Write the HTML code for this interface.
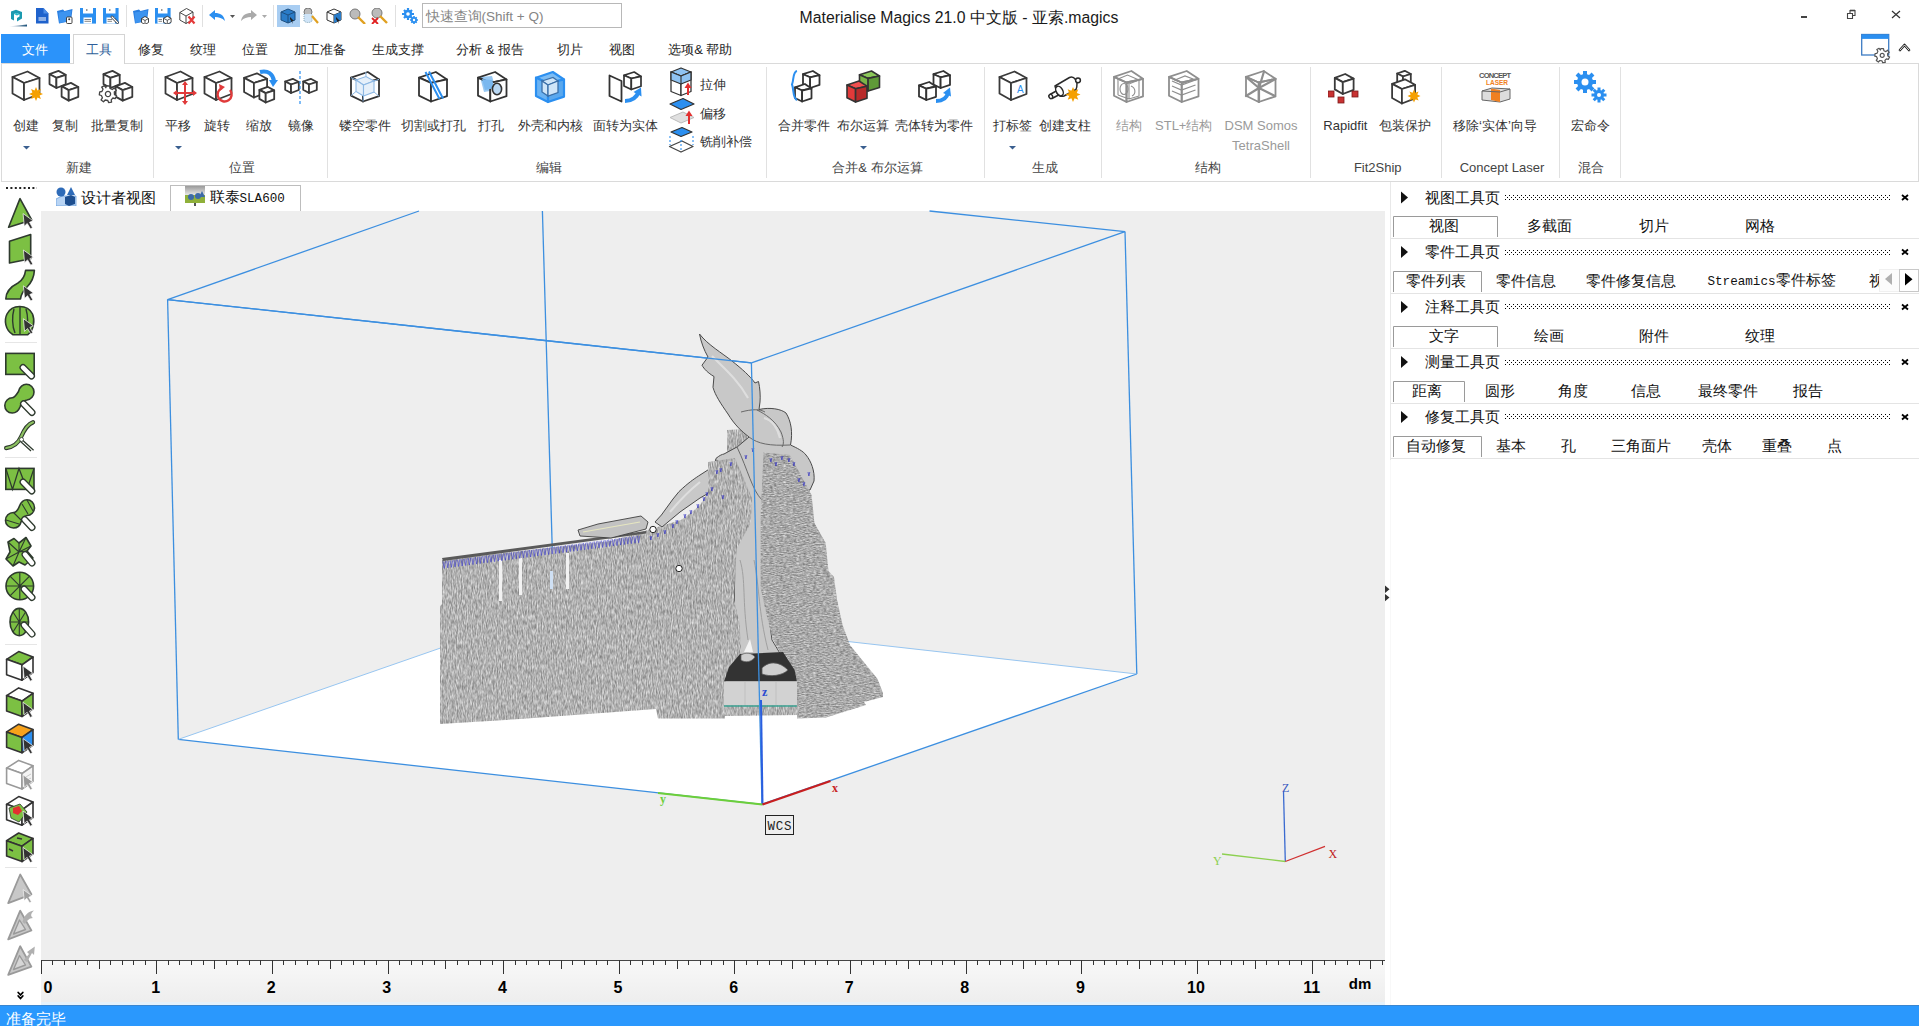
<!DOCTYPE html><html><head><meta charset="utf-8"><title>Magics</title><style>
html,body{margin:0;padding:0;width:1919px;height:1026px;overflow:hidden;background:#fff;font-family:'Liberation Sans',sans-serif;}
#root{position:relative;width:1919px;height:1026px;overflow:hidden;}
</style></head><body><div id="root">
<svg style="position:absolute;left:8px;top:9px;" width="20" height="19" viewBox="0 0 20 19"><defs><linearGradient id="lg1" x1="0" x2="1"><stop offset="0" stop-color="#fff"/><stop offset="1" stop-color="#1a4f78"/></linearGradient></defs><path d="M3 2.5 L8 0.8 L14 3 L14 9.5 L9 12.5 L9 9 L11.5 7.5 L11.5 5.2 L8.5 4 L6 5 L6 11.5 L3 10Z" fill="#1b9ab0"/><path d="M6 5 L8.5 4 L11.5 5.2 L9 6.5Z" fill="#23b6c8"/><path d="M0.5 17.5 L19 15.5 L19 17.5Z" fill="url(#lg1)"/></svg>
<svg style="position:absolute;left:36px;top:8px;" width="13" height="16" viewBox="0 0 13 16"><path d="M0 0 H7.5 L12.5 5.5 V15.6 H0Z" fill="#1f62cc"/><path d="M7.5 0 V5.5 H12.5" fill="#4d8ee8"/><path d="M2.5 10 H10 M2.5 12 H10" stroke="#fff" stroke-width="1.1"/></svg>
<svg style="position:absolute;left:57px;top:8px;" width="16" height="16" viewBox="0 0 16 16"><path d="M0 3 L6 1.5 L7.5 3 L15.5 1 L14 13 L2 15.5Z" fill="#2a7ee0"/><path d="M1.5 4.5 L14.5 2.5 L13 13 L2.5 15Z" fill="#3d94f0"/><rect x="9.5" y="9" width="5.5" height="6.5" rx="1" fill="#fff" stroke="#333" stroke-width="0.9"/><circle cx="12.2" cy="11.2" r="1" fill="#333"/></svg>
<svg style="position:absolute;left:80px;top:8px;" width="16" height="16" viewBox="0 0 16 16"><path d="M0 0 H16 V15.6 H0Z" fill="#2b8ff0"/><rect x="3" y="0" width="10" height="5.5" fill="#fff"/><rect x="6" y="1.5" width="1.5" height="1" fill="#333"/><rect x="3.5" y="9.5" width="8.5" height="6.1" fill="#fff"/><path d="M4.5 11.5 H11 M4.5 13.3 H11" stroke="#777" stroke-width="0.9"/></svg>
<svg style="position:absolute;left:103px;top:8px;" width="16" height="16" viewBox="0 0 16 16"><path d="M0 0 H15.6 V15.6 H0Z" fill="#2b8ff0"/><rect x="3" y="0" width="9.5" height="5.5" fill="#fff"/><rect x="6" y="1.5" width="1.5" height="1" fill="#333"/><rect x="3.5" y="9.5" width="8.5" height="6.1" fill="#fff"/><path d="M4.5 11.5 H9 M4.5 13.3 H9" stroke="#777" stroke-width="0.9"/><path d="M9 9 L14.5 14.5" stroke="#333" stroke-width="2.6" stroke-linecap="round"/><path d="M9 9 L14.5 14.5" stroke="#fff" stroke-width="1.2" stroke-linecap="round"/></svg>
<div style="position:absolute;left:126px;top:5px;width:1px;height:22px;background:#e0e0e0"></div>
<svg style="position:absolute;left:133px;top:8px;" width="17" height="16" viewBox="0 0 17 16"><path d="M0 3 L6 1.5 L7.5 3 L15.5 1 L14 13 L2 15.5Z" fill="#2a7ee0"/><path d="M1.5 4.5 L14.5 2.5 L13 13 L2.5 15Z" fill="#3d94f0"/><g transform="translate(12,12.5)"><path d="M0 -4 L3.5 -2 L3.5 2 L0 4 L-3.5 2 L-3.5 -2Z" fill="#fff" stroke="#333" stroke-width="0.9"/><path d="M-3.5 -2 L0 0 L3.5 -2 M0 0 V4" fill="none" stroke="#333" stroke-width="0.8"/></g></svg>
<svg style="position:absolute;left:155px;top:8px;" width="17" height="16" viewBox="0 0 17 16"><path d="M0 0 H15.6 V15.6 H0Z" fill="#2b8ff0"/><rect x="3" y="0" width="9.5" height="5.5" fill="#fff"/><rect x="6" y="1.5" width="1.5" height="1" fill="#333"/><rect x="2.5" y="9.5" width="6" height="6.1" fill="#fff"/><path d="M3.5 11.5 H7 M3.5 13.3 H7" stroke="#777" stroke-width="0.9"/><g transform="translate(12.3,12.3)"><path d="M0 -4 L3.8 -2 L3.8 2 L0 4 L-3.8 2 L-3.8 -2Z" fill="#fff" stroke="#333" stroke-width="0.9"/><path d="M-3.8 -2 L0 0 L3.8 -2 M0 0 V4" fill="none" stroke="#333" stroke-width="0.8"/></g></svg>
<svg style="position:absolute;left:179px;top:8px;" width="17" height="17" viewBox="0 0 17 17"><path d="M7.5 0.5 L14 4 L14 11.5 L7 15.5 L0.8 12 L0.8 4.5Z M0.8 4.5 L7 8 L14 4 M7 8 V15.5" fill="#fff" stroke="#333" stroke-width="0.9" stroke-linejoin="round"/><path d="M9.5 8.5 L15.5 15.5 M15.5 8.5 L9.5 15.5" stroke="#e43a3a" stroke-width="2.2"/></svg>
<div style="position:absolute;left:202px;top:5px;width:1px;height:22px;background:#e0e0e0"></div>
<svg style="position:absolute;left:209px;top:10px;" width="28" height="12" viewBox="0 0 28 12"><path d="M0 5 L6 0 V3 C11 3 15 5 16 11 C13 8 10 7 6 7 V10Z" fill="#2b8ff0"/><path d="M21 5 H26 L23.5 8Z" fill="#555"/></svg>
<svg style="position:absolute;left:241px;top:10px;" width="28" height="12" viewBox="0 0 28 12"><path d="M16 5 L10 0 V3 C5 3 1 5 0 11 C3 8 6 7 10 7 V10Z" fill="#aaa"/><path d="M21 5 H26 L23.5 8Z" fill="#aaa"/></svg>
<div style="position:absolute;left:273px;top:5px;width:1px;height:22px;background:#e0e0e0"></div>
<div style="position:absolute;left:277px;top:5px;width:23px;height:22px;background:#a8cdf2"></div>
<svg style="position:absolute;left:280px;top:8px;" width="17" height="16" viewBox="0 0 17 16"><path d="M8 1 L15 4 L15 12 L8 15 L1 12 L1 4Z" fill="#2a7cc8" stroke="#1d4f80" stroke-width="1"/><path d="M1 4 L8 7 L15 4 M8 7 V15" fill="none" stroke="#1d4f80"/><path d="M10 9 L14 13 L12 13 L13 16 L10 11Z" fill="#222"/></svg>
<svg style="position:absolute;left:303px;top:8px;" width="17" height="16" viewBox="0 0 17 16"><circle cx="5" cy="4" r="4" fill="#bbb" stroke="#777"/><path d="M1 6 V13 C3 15 7 15 9 13 V6" fill="#cfe4f7" stroke="#8ab" stroke-dasharray="1 1"/><path d="M9 8 L15 15" stroke="#e0a020" stroke-width="2.2"/></svg>
<svg style="position:absolute;left:326px;top:8px;" width="16" height="16" viewBox="0 0 16 16"><path d="M8 1 L15 4 L15 12 L8 15 L1 12 L1 4Z M1 4 L8 7 L15 4 M8 7 V15" fill="#fff" stroke="#333" stroke-width="1"/><path d="M8 7 L15 4 L15 12 L8 15Z" fill="#2a7cc8"/><path d="M10 9 L14 13 L12 13 L13 16 L10 11Z" fill="#222"/></svg>
<svg style="position:absolute;left:349px;top:8px;" width="17" height="16" viewBox="0 0 17 16"><circle cx="6" cy="6" r="5" fill="#bbb" stroke="#777"/><path d="M9 9 L16 16" stroke="#e0a020" stroke-width="2.4"/></svg>
<svg style="position:absolute;left:371px;top:8px;" width="17" height="16" viewBox="0 0 17 16"><circle cx="6" cy="5" r="5" fill="#bbb" stroke="#777"/><path d="M9 8 L16 15" stroke="#e0a020" stroke-width="2.4"/><path d="M1 10 L7 16 M7 10 L1 16" stroke="#e02020" stroke-width="1.8"/></svg>
<div style="position:absolute;left:395px;top:5px;width:1px;height:22px;background:#e0e0e0"></div>
<svg style="position:absolute;left:402px;top:8px;" width="16" height="16" viewBox="0 0 16 16"><g fill="#2b8ff0"><circle cx="6" cy="6" r="4.2"/><circle cx="12" cy="12" r="3"/></g><g stroke="#2b8ff0" stroke-width="2.2"><path d="M6 0 V12 M0 6 H12 M2 2 L10 10 M10 2 L2 10"/><path d="M12 8 V16 M8 12 H16 M9.3 9.3 L14.7 14.7 M14.7 9.3 L9.3 14.7" stroke-width="1.6"/></g><circle cx="6" cy="6" r="1.8" fill="#fff"/><circle cx="12" cy="12" r="1.2" fill="#fff"/></svg>
<div style="position:absolute;left:422px;top:3px;width:200px;height:25px;border:1px solid #b8b8b8;background:#fff;box-sizing:border-box"></div>
<div style="position:absolute;left:425.5px;top:16.7px;transform:translate(0,-50%);white-space:nowrap;font-family:'Liberation Sans', sans-serif;font-size:13.5px;line-height:1;color:#858585;">快速查询(Shift + Q)</div>
<div style="position:absolute;left:959px;top:17.5px;transform:translate(-50%,-50%);white-space:nowrap;font-family:'Liberation Sans', sans-serif;font-size:15.8px;line-height:1;color:#1a1a1a;">Materialise Magics 21.0 中文版 - 亚索.magics</div>
<div style="position:absolute;left:1801px;top:16px;width:6px;height:1.6px;background:#444"></div>
<svg style="position:absolute;left:1846px;top:9px;" width="11" height="11" viewBox="0 0 11 11"><path d="M1.5 4.5 H6.5 V9.5 H1.5Z M4 4.5 V1.5 H9 V6.5 H6.5" fill="none" stroke="#444" stroke-width="1.1"/><path d="M4 1.5 H9" stroke="#444" stroke-width="1.6"/></svg>
<svg style="position:absolute;left:1891px;top:10px;" width="10" height="9" viewBox="0 0 10 9"><path d="M1 1 L9 8 M9 1 L1 8" stroke="#333" stroke-width="1.2"/></svg>
<div style="position:absolute;left:1px;top:63px;width:1918px;height:119px;border:1px solid #dadada;background:#fff;box-sizing:border-box"></div>
<div style="position:absolute;left:1px;top:34px;width:69px;height:29px;background:#2b93fa"></div>
<div style="position:absolute;left:35px;top:49px;transform:translate(-50%,-50%);white-space:nowrap;font-family:'Liberation Sans', sans-serif;font-size:13px;line-height:1;color:#fff;">文件</div>
<div style="position:absolute;left:73px;top:34px;width:52px;height:30px;border:1px solid #d4d4d4;border-bottom:none;background:#fff;box-sizing:border-box"></div>
<div style="position:absolute;left:99px;top:49px;transform:translate(-50%,-50%);white-space:nowrap;font-family:'Liberation Sans', sans-serif;font-size:13px;line-height:1;color:#2f5f9a;">工具</div>
<div style="position:absolute;left:150.8px;top:49px;transform:translate(-50%,-50%);white-space:nowrap;font-family:'Liberation Sans', sans-serif;font-size:13px;line-height:1;color:#262626;">修复</div>
<div style="position:absolute;left:203.3px;top:49px;transform:translate(-50%,-50%);white-space:nowrap;font-family:'Liberation Sans', sans-serif;font-size:13px;line-height:1;color:#262626;">纹理</div>
<div style="position:absolute;left:254.7px;top:49px;transform:translate(-50%,-50%);white-space:nowrap;font-family:'Liberation Sans', sans-serif;font-size:13px;line-height:1;color:#262626;">位置</div>
<div style="position:absolute;left:319.5px;top:49px;transform:translate(-50%,-50%);white-space:nowrap;font-family:'Liberation Sans', sans-serif;font-size:13px;line-height:1;color:#262626;">加工准备</div>
<div style="position:absolute;left:397.8px;top:49px;transform:translate(-50%,-50%);white-space:nowrap;font-family:'Liberation Sans', sans-serif;font-size:13px;line-height:1;color:#262626;">生成支撑</div>
<div style="position:absolute;left:490px;top:49px;transform:translate(-50%,-50%);white-space:nowrap;font-family:'Liberation Sans', sans-serif;font-size:13px;line-height:1;color:#262626;">分析 &amp; 报告</div>
<div style="position:absolute;left:570.3px;top:49px;transform:translate(-50%,-50%);white-space:nowrap;font-family:'Liberation Sans', sans-serif;font-size:13px;line-height:1;color:#262626;">切片</div>
<div style="position:absolute;left:622.2px;top:49px;transform:translate(-50%,-50%);white-space:nowrap;font-family:'Liberation Sans', sans-serif;font-size:13px;line-height:1;color:#262626;">视图</div>
<div style="position:absolute;left:700.3px;top:49px;transform:translate(-50%,-50%);white-space:nowrap;font-family:'Liberation Sans', sans-serif;font-size:13px;line-height:1;color:#262626;">选项&amp; 帮助</div>
<svg style="position:absolute;left:1860px;top:33px;" width="32" height="31" viewBox="0 0 32 31"><rect x="1.7" y="1.5" width="27" height="20.5" fill="#fff" stroke="#3d7cc4" stroke-width="1.3"/><rect x="1.7" y="1.5" width="27" height="4.4" fill="#2b8ff0"/><g transform="translate(22.2,22.4)"><path d="M-1.3 -6.8 H1.3 L1.7 -4.7 L3.7 -3.8 L5.3 -5.2 L7 -3.1 L5.4 -1.7 L5.6 0.5 L7.4 1.5 L6.2 3.9 L4.2 3.4 L2.7 5 L3.1 7 L0.5 7.3 L-0.2 5.5 L-2.4 5.1 L-3.8 6.6 L-5.9 5 L-4.8 3.2 L-5.6 1.3 L-7.4 0.8 L-7.1 -1.9 L-5.2 -2.1 L-4.3 -4.1 L-5.4 -5.9 L-3.1 -7.1 L-1.9 -5.4Z" fill="#fff" stroke="#555" stroke-width="1.2" stroke-linejoin="round"/><circle r="2" fill="#fff" stroke="#555" stroke-width="1.2"/></g></svg>
<svg style="position:absolute;left:1898px;top:42px;" width="13" height="10" viewBox="0 0 13 10"><path d="M2 8 L6.5 3 L11 8" fill="none" stroke="#222" stroke-width="2.6" stroke-linejoin="round" stroke-linecap="round"/><path d="M2 8 L6.5 3 L11 8" fill="none" stroke="#fff" stroke-width="0.9" stroke-linejoin="round" stroke-linecap="round"/></svg>
<div style="position:absolute;left:153px;top:67px;width:1px;height:111px;background:#e1e1e1"></div>
<div style="position:absolute;left:327px;top:67px;width:1px;height:111px;background:#e1e1e1"></div>
<div style="position:absolute;left:766px;top:67px;width:1px;height:111px;background:#e1e1e1"></div>
<div style="position:absolute;left:984px;top:67px;width:1px;height:111px;background:#e1e1e1"></div>
<div style="position:absolute;left:1101px;top:67px;width:1px;height:111px;background:#e1e1e1"></div>
<div style="position:absolute;left:1310px;top:67px;width:1px;height:111px;background:#e1e1e1"></div>
<div style="position:absolute;left:1441px;top:67px;width:1px;height:111px;background:#e1e1e1"></div>
<div style="position:absolute;left:1559px;top:67px;width:1px;height:111px;background:#e1e1e1"></div>
<div style="position:absolute;left:1620px;top:67px;width:1px;height:111px;background:#e1e1e1"></div>
<svg style="position:absolute;left:8px;top:68px;" width="40" height="38" viewBox="0 0 40 38"><path d="M4.5 9.0 L19.5 3.5 L31.5 10.0 L16.0 15.0Z" fill="#fff" stroke="#3a3a3a" stroke-width="1.8" stroke-linejoin="round"/><path d="M4.5 9.0 L16.0 15.0 L16.0 32.0 L4.5 25.5Z" fill="#fff" stroke="#3a3a3a" stroke-width="1.8" stroke-linejoin="round"/><path d="M16.0 15.0 L31.5 10.0 L31.5 26.0 L16.0 32.0Z" fill="#fff" stroke="#3a3a3a" stroke-width="1.8" stroke-linejoin="round"/><polygon points="35.0,26.0 31.6,27.5 32.9,30.9 29.5,29.6 28.0,33.0 26.5,29.6 23.1,30.9 24.4,27.5 21.0,26.0 24.4,24.5 23.1,21.1 26.5,22.4 28.0,19.0 29.5,22.4 32.9,21.1 31.6,24.5" fill="#f5a000"/></svg>
<div style="position:absolute;left:25.9px;top:125px;transform:translate(-50%,-50%);white-space:nowrap;font-family:'Liberation Sans', sans-serif;font-size:13px;line-height:1;color:#333;">创建</div>
<svg style="position:absolute;left:22.5px;top:145.5px;" width="7" height="4" viewBox="0 0 7 4"><path d="M0 0 H7 L3.5 3.5Z" fill="#3a5f8f"/></svg>
<svg style="position:absolute;left:46px;top:68px;" width="40" height="38" viewBox="0 0 40 38"><path d="M3.5 6.2 L12.5 2.9 L19.7 6.8 L10.4 9.8Z" fill="#fff" stroke="#3a3a3a" stroke-width="1.8" stroke-linejoin="round"/><path d="M3.5 6.2 L10.4 9.8 L10.4 20.0 L3.5 16.1Z" fill="#fff" stroke="#3a3a3a" stroke-width="1.8" stroke-linejoin="round"/><path d="M10.4 9.8 L19.7 6.8 L19.7 16.4 L10.4 20.0Z" fill="#fff" stroke="#3a3a3a" stroke-width="1.8" stroke-linejoin="round"/><path d="M15.6 18.3 L24.9 14.9 L32.3 19.0 L22.7 22.1Z" fill="#fff" stroke="#3a3a3a" stroke-width="1.8" stroke-linejoin="round"/><path d="M15.6 18.3 L22.7 22.1 L22.7 32.6 L15.6 28.6Z" fill="#fff" stroke="#3a3a3a" stroke-width="1.8" stroke-linejoin="round"/><path d="M22.7 22.1 L32.3 19.0 L32.3 28.9 L22.7 32.6Z" fill="#fff" stroke="#3a3a3a" stroke-width="1.8" stroke-linejoin="round"/></svg>
<div style="position:absolute;left:64.5px;top:125px;transform:translate(-50%,-50%);white-space:nowrap;font-family:'Liberation Sans', sans-serif;font-size:13px;line-height:1;color:#333;">复制</div>
<svg style="position:absolute;left:98px;top:68px;" width="40" height="38" viewBox="0 0 40 38"><path d="M5.5 6.2 L14.5 2.9 L21.7 6.8 L12.4 9.8Z" fill="#fff" stroke="#3a3a3a" stroke-width="1.8" stroke-linejoin="round"/><path d="M5.5 6.2 L12.4 9.8 L12.4 20.0 L5.5 16.1Z" fill="#fff" stroke="#3a3a3a" stroke-width="1.8" stroke-linejoin="round"/><path d="M12.4 9.8 L21.7 6.8 L21.7 16.4 L12.4 20.0Z" fill="#fff" stroke="#3a3a3a" stroke-width="1.8" stroke-linejoin="round"/><path d="M17.6 18.3 L26.9 14.9 L34.3 19.0 L24.7 22.1Z" fill="#fff" stroke="#3a3a3a" stroke-width="1.8" stroke-linejoin="round"/><path d="M17.6 18.3 L24.7 22.1 L24.7 32.6 L17.6 28.6Z" fill="#fff" stroke="#3a3a3a" stroke-width="1.8" stroke-linejoin="round"/><path d="M24.7 22.1 L34.3 19.0 L34.3 28.9 L24.7 32.6Z" fill="#fff" stroke="#3a3a3a" stroke-width="1.8" stroke-linejoin="round"/><g transform="translate(10,26)"><path d="M-1.6 -8 H1.6 L2 -5.6 L4.3 -4.5 L6.2 -6.1 L8.2 -3.6 L6.3 -2 L6.5 0.6 L8.6 1.8 L7.2 4.6 L4.9 4 L3.2 5.9 L3.6 8.2 L0.6 8.6 L-0.2 6.5 L-2.8 6 L-4.5 7.8 L-6.9 5.9 L-5.6 3.8 L-6.6 1.5 L-8.7 0.9 L-8.3 -2.2 L-6.1 -2.5 L-5 -4.8 L-6.3 -6.9 L-3.6 -8.3 L-2.2 -6.3Z" fill="#fff" stroke="#444" stroke-width="1.3" stroke-linejoin="round"/><circle r="2.6" fill="#fff" stroke="#444" stroke-width="1.3"/></g></svg>
<div style="position:absolute;left:116.6px;top:125px;transform:translate(-50%,-50%);white-space:nowrap;font-family:'Liberation Sans', sans-serif;font-size:13px;line-height:1;color:#333;">批量复制</div>
<div style="position:absolute;left:78.75px;top:167px;transform:translate(-50%,-50%);white-space:nowrap;font-family:'Liberation Sans', sans-serif;font-size:13px;line-height:1;color:#444;">新建</div>
<svg style="position:absolute;left:161px;top:68px;" width="40" height="38" viewBox="0 0 40 38"><path d="M4.5 9.0 L19.5 3.5 L31.5 10.0 L16.0 15.0Z" fill="#fff" stroke="#3a3a3a" stroke-width="1.8" stroke-linejoin="round"/><path d="M4.5 9.0 L16.0 15.0 L16.0 32.0 L4.5 25.5Z" fill="#fff" stroke="#3a3a3a" stroke-width="1.8" stroke-linejoin="round"/><path d="M16.0 15.0 L31.5 10.0 L31.5 26.0 L16.0 32.0Z" fill="#fff" stroke="#3a3a3a" stroke-width="1.8" stroke-linejoin="round"/><g stroke="#e03a3a" stroke-width="2" fill="#e03a3a"><path d="M24 16 V34 M15 25 H33"/><path d="M24 13 L21 17 H27Z M24 37 L21 33 H27Z M12 25 L16 22 V28Z M36 25 L32 22 V28Z" stroke="none"/></g></svg>
<div style="position:absolute;left:177.75px;top:125px;transform:translate(-50%,-50%);white-space:nowrap;font-family:'Liberation Sans', sans-serif;font-size:13px;line-height:1;color:#333;">平移</div>
<svg style="position:absolute;left:174.5px;top:145.5px;" width="7" height="4" viewBox="0 0 7 4"><path d="M0 0 H7 L3.5 3.5Z" fill="#3a5f8f"/></svg>
<svg style="position:absolute;left:200px;top:68px;" width="40" height="38" viewBox="0 0 40 38"><path d="M4.5 9.0 L19.5 3.5 L31.5 10.0 L16.0 15.0Z" fill="#fff" stroke="#3a3a3a" stroke-width="1.8" stroke-linejoin="round"/><path d="M4.5 9.0 L16.0 15.0 L16.0 32.0 L4.5 25.5Z" fill="#fff" stroke="#3a3a3a" stroke-width="1.8" stroke-linejoin="round"/><path d="M16.0 15.0 L31.5 10.0 L31.5 26.0 L16.0 32.0Z" fill="#fff" stroke="#3a3a3a" stroke-width="1.8" stroke-linejoin="round"/><path d="M30 22 A7 7 0 1 1 22 20" fill="none" stroke="#e03a3a" stroke-width="2.4"/><path d="M19 16 L25 19 L20 23Z" fill="#e03a3a"/></svg>
<div style="position:absolute;left:216.9px;top:125px;transform:translate(-50%,-50%);white-space:nowrap;font-family:'Liberation Sans', sans-serif;font-size:13px;line-height:1;color:#333;">旋转</div>
<svg style="position:absolute;left:240px;top:68px;" width="40" height="38" viewBox="0 0 40 38"><path d="M4.1 9.9 L16.9 5.3 L27.1 10.8 L13.9 15.0Z" fill="#fff" stroke="#3a3a3a" stroke-width="1.8" stroke-linejoin="round"/><path d="M4.1 9.9 L13.9 15.0 L13.9 29.5 L4.1 24.0Z" fill="#fff" stroke="#3a3a3a" stroke-width="1.8" stroke-linejoin="round"/><path d="M13.9 15.0 L27.1 10.8 L27.1 24.4 L13.9 29.5Z" fill="#fff" stroke="#3a3a3a" stroke-width="1.8" stroke-linejoin="round"/><path d="M19.4 21.9 L27.6 18.8 L34.2 22.4 L25.7 25.1Z" fill="#fff" stroke="#3a3a3a" stroke-width="1.8" stroke-linejoin="round"/><path d="M19.4 21.9 L25.7 25.1 L25.7 34.5 L19.4 30.9Z" fill="#fff" stroke="#3a3a3a" stroke-width="1.8" stroke-linejoin="round"/><path d="M25.7 25.1 L34.2 22.4 L34.2 31.2 L25.7 34.5Z" fill="#fff" stroke="#3a3a3a" stroke-width="1.8" stroke-linejoin="round"/><path d="M20 4 C28 2 33 6 34 13" fill="none" stroke="#2b8ff0" stroke-width="4"/><path d="M29 12 L38 12 L33 19Z" fill="#2b8ff0"/></svg>
<div style="position:absolute;left:258.75px;top:125px;transform:translate(-50%,-50%);white-space:nowrap;font-family:'Liberation Sans', sans-serif;font-size:13px;line-height:1;color:#333;">缩放</div>
<svg style="position:absolute;left:282px;top:68px;" width="40" height="38" viewBox="0 0 40 38"><path d="M3.2 13.5 L10.8 10.8 L16.8 14.0 L9.0 16.5Z" fill="#fff" stroke="#3a3a3a" stroke-width="1.8" stroke-linejoin="round"/><path d="M3.2 13.5 L9.0 16.5 L9.0 25.0 L3.2 21.8Z" fill="#fff" stroke="#3a3a3a" stroke-width="1.8" stroke-linejoin="round"/><path d="M9.0 16.5 L16.8 14.0 L16.8 22.0 L9.0 25.0Z" fill="#fff" stroke="#3a3a3a" stroke-width="1.8" stroke-linejoin="round"/><path d="M21.2 13.5 L28.8 10.8 L34.8 14.0 L27.0 16.5Z" fill="#fff" stroke="#3a3a3a" stroke-width="1.8" stroke-linejoin="round"/><path d="M21.2 13.5 L27.0 16.5 L27.0 25.0 L21.2 21.8Z" fill="#fff" stroke="#3a3a3a" stroke-width="1.8" stroke-linejoin="round"/><path d="M27.0 16.5 L34.8 14.0 L34.8 22.0 L27.0 25.0Z" fill="#fff" stroke="#3a3a3a" stroke-width="1.8" stroke-linejoin="round"/><path d="M18 3 V36" stroke="#2b8ff0" stroke-width="1.2" stroke-dasharray="3 2"/></svg>
<div style="position:absolute;left:300.6px;top:125px;transform:translate(-50%,-50%);white-space:nowrap;font-family:'Liberation Sans', sans-serif;font-size:13px;line-height:1;color:#333;">镜像</div>
<div style="position:absolute;left:242px;top:167px;transform:translate(-50%,-50%);white-space:nowrap;font-family:'Liberation Sans', sans-serif;font-size:13px;line-height:1;color:#444;">位置</div>
<svg style="position:absolute;left:0px;top:0px;" width="700" height="110" viewBox="0 0 700 110"><polygon points="351.0,77.6 367.8,72.0 379.0,79.4 363.0,82.9" fill="#fff" stroke="#333" stroke-width="1.8" stroke-linejoin="round"/><polygon points="351.0,77.6 363.0,82.9 363.0,101.5 351.0,95.6" fill="#fff" stroke="#333" stroke-width="1.8" stroke-linejoin="round"/><polygon points="363.0,82.9 379.0,79.4 379.0,96.2 363.0,101.5" fill="#fff" stroke="#333" stroke-width="1.8" stroke-linejoin="round"/><polygon points="356,80 366,76.5 374,81 363.5,85" fill="#e6f0fa" stroke="#8db8e4" stroke-width="1.1"/><polygon points="356,80 363.5,85 363.5,96 356,91.5" fill="#e6f0fa" stroke="#8db8e4" stroke-width="1.1"/><polygon points="363.5,85 374,81 374,92 363.5,96" fill="#e6f0fa" stroke="#8db8e4" stroke-width="1.1"/><path d="M351 77.6 L356 80 M365.8 72 L366 76.5 M379 79.4 L374 81 M363 101.5 L363.5 96 M351 95.6 L356 91.5 M379 96.2 L374 92" stroke="#8db8e4" stroke-width="1"/><polygon points="419.0,77.6 435.8,72.0 447.0,79.4 431.0,82.9" fill="#fff" stroke="#333" stroke-width="1.8" stroke-linejoin="round"/><polygon points="419.0,77.6 431.0,82.9 431.0,101.5 419.0,95.6" fill="#fff" stroke="#333" stroke-width="1.8" stroke-linejoin="round"/><polygon points="431.0,82.9 447.0,79.4 447.0,96.2 431.0,101.5" fill="#fff" stroke="#333" stroke-width="1.8" stroke-linejoin="round"/><path d="M425.5 72 L439.5 99 M429 71.5 L443 98.5" stroke="#2b8ff0" stroke-width="2"/><path d="M480 77 L492 76 L496 90 L484 92Z" fill="#8cc2f2" opacity="0.9"/><polygon points="478.0,77.6 495.1,72.0 506.5,79.4 490.3,82.9" fill="none" stroke="#333" stroke-width="1.8" stroke-linejoin="round"/><polygon points="478.0,77.6 490.3,82.9 490.3,101.5 478.0,95.6" fill="none" stroke="#333" stroke-width="1.8" stroke-linejoin="round"/><polygon points="490.3,82.9 506.5,79.4 506.5,96.2 490.3,101.5" fill="#fff" stroke="#333" stroke-width="1.8" stroke-linejoin="round"/><path d="M482 79 L492 80 L495 88 L485 90Z" fill="#7ab8ef"/><ellipse cx="497" cy="89" rx="4.6" ry="5.8" fill="#b9d8f4" stroke="#333" stroke-width="1.6"/><polygon points="536.0,77.7 552.8,72.0 564.0,79.5 548.0,83.1" fill="#7cbcf4" stroke="#2b8ff0" stroke-width="2.2" stroke-linejoin="round"/><polygon points="536.0,77.7 548.0,83.1 548.0,102.0 536.0,96.0" fill="#6ab2f2" stroke="#2b8ff0" stroke-width="2.2" stroke-linejoin="round"/><polygon points="548.0,83.1 564.0,79.5 564.0,96.6 548.0,102.0" fill="#5aa8ee" stroke="#2b8ff0" stroke-width="2.2" stroke-linejoin="round"/><polygon points="542,81 553,77.5 558,81 548,85" fill="#cfe5f8" stroke="#3a6fa8" stroke-width="1.3"/><polygon points="542,81 548,85 548,96 542,92" fill="#cfe5f8" stroke="#3a6fa8" stroke-width="1.3"/><polygon points="548,85 558,81 558,92.5 548,96" fill="#cfe5f8" stroke="#3a6fa8" stroke-width="1.3"/><polygon points="609.5,75.5 621.5,81 621.5,101.5 609.5,96" fill="#fff" stroke="#333" stroke-width="1.8" stroke-linejoin="round"/><polygon points="624.0,75.3 634.2,72.0 641.0,76.4 631.3,78.5" fill="#fff" stroke="#333" stroke-width="1.7" stroke-linejoin="round"/><polygon points="624.0,75.3 631.3,78.5 631.3,89.5 624.0,86.0" fill="#fff" stroke="#333" stroke-width="1.7" stroke-linejoin="round"/><polygon points="631.3,78.5 641.0,76.4 641.0,86.3 631.3,89.5" fill="#fff" stroke="#333" stroke-width="1.7" stroke-linejoin="round"/><path d="M625 101 C632 101 637 97 638.5 92" fill="none" stroke="#2b8ff0" stroke-width="4.2"/><path d="M633.5 92 L641 87.5 L641.5 96.5Z" fill="#2b8ff0"/></svg>
<div style="position:absolute;left:364.6px;top:125px;transform:translate(-50%,-50%);white-space:nowrap;font-family:'Liberation Sans', sans-serif;font-size:13px;line-height:1;color:#333;">镂空零件</div>
<div style="position:absolute;left:433.4px;top:125px;transform:translate(-50%,-50%);white-space:nowrap;font-family:'Liberation Sans', sans-serif;font-size:13px;line-height:1;color:#333;">切割或打孔</div>
<div style="position:absolute;left:491px;top:125px;transform:translate(-50%,-50%);white-space:nowrap;font-family:'Liberation Sans', sans-serif;font-size:13px;line-height:1;color:#333;">打孔</div>
<div style="position:absolute;left:550px;top:125px;transform:translate(-50%,-50%);white-space:nowrap;font-family:'Liberation Sans', sans-serif;font-size:13px;line-height:1;color:#333;">外壳和内核</div>
<div style="position:absolute;left:625.6px;top:125px;transform:translate(-50%,-50%);white-space:nowrap;font-family:'Liberation Sans', sans-serif;font-size:13px;line-height:1;color:#333;">面转为实体</div>
<svg style="position:absolute;left:0px;top:0px;" width="1000" height="160" viewBox="0 0 1000 160"><polygon points="671,72 681,68 691,72 681,76" fill="#8fc3f2" stroke="#333" stroke-width="1.3" stroke-linejoin="round"/><polygon points="671,72 681,76 681,95.5 671,91.5" fill="#fff" stroke="#333" stroke-width="1.3" stroke-linejoin="round"/><polygon points="681,76 691,72 691,91.5 681,95.5" fill="#fff" stroke="#333" stroke-width="1.3" stroke-linejoin="round"/><polygon points="671,72 681,76 691,72 691,80 681,84 671,80" fill="#8fc3f2" stroke="#333" stroke-width="1.3" stroke-linejoin="round"/><path d="M681 76 V84" stroke="#333" stroke-width="1.1"/><path d="M688 95 V86" stroke="#e23030" stroke-width="2"/><path d="M684.5 88 L688 82.5 L691.5 88Z" fill="#e23030"/><polygon points="670,104 683,98.5 694,104 681,109.5" fill="#2b8ff0" stroke="#333" stroke-width="1.2" stroke-linejoin="round"/><polygon points="670,117.5 683,112 694,117.5 681,123" fill="#e0e0e0" stroke="#bbb" stroke-width="1" stroke-linejoin="round"/><path d="M689 124 V114" stroke="#e23030" stroke-width="2"/><path d="M685.5 116 L689 110.5 L692.5 116Z" fill="#e23030"/><polygon points="671,132 682,127.5 692,132 681,136.5" fill="#2b8ff0" stroke="#333" stroke-width="1.2" stroke-linejoin="round"/><polygon points="669.5,146.5 682,141 693,146.5 681,152" fill="#fff" stroke="#444" stroke-width="1.3" stroke-linejoin="round"/><path d="M670 136 V145 M693 136 V145 M681 140 V150" stroke="#2b8ff0" stroke-width="1.1" stroke-dasharray="2 2"/></svg>
<div style="position:absolute;left:700px;top:84px;transform:translate(0,-50%);white-space:nowrap;font-family:'Liberation Sans', sans-serif;font-size:13px;line-height:1;color:#333;">拉伸</div>
<div style="position:absolute;left:700px;top:112.5px;transform:translate(0,-50%);white-space:nowrap;font-family:'Liberation Sans', sans-serif;font-size:13px;line-height:1;color:#333;">偏移</div>
<div style="position:absolute;left:700px;top:141px;transform:translate(0,-50%);white-space:nowrap;font-family:'Liberation Sans', sans-serif;font-size:13px;line-height:1;color:#333;">铣削补偿</div>
<div style="position:absolute;left:549px;top:167px;transform:translate(-50%,-50%);white-space:nowrap;font-family:'Liberation Sans', sans-serif;font-size:13px;line-height:1;color:#444;">编辑</div>
<svg style="position:absolute;left:0px;top:0px;" width="1000" height="110" viewBox="0 0 1000 110"><polygon points="803.0,74.2 812.9,71.0 819.5,75.2 810.1,77.3" fill="#fff" stroke="#333" stroke-width="1.8" stroke-linejoin="round"/><polygon points="803.0,74.2 810.1,77.3 810.1,88.0 803.0,84.6" fill="#fff" stroke="#333" stroke-width="1.8" stroke-linejoin="round"/><polygon points="810.1,77.3 819.5,75.2 819.5,84.9 810.1,88.0" fill="#fff" stroke="#333" stroke-width="1.8" stroke-linejoin="round"/><polygon points="795.0,87.3 804.9,84.0 811.5,88.4 802.1,90.5" fill="#fff" stroke="#333" stroke-width="1.8" stroke-linejoin="round"/><polygon points="795.0,87.3 802.1,90.5 802.1,101.5 795.0,98.0" fill="#fff" stroke="#333" stroke-width="1.8" stroke-linejoin="round"/><polygon points="802.1,90.5 811.5,88.4 811.5,98.3 802.1,101.5" fill="#fff" stroke="#333" stroke-width="1.8" stroke-linejoin="round"/><path d="M797 71 C792.5 72 794 80 792 84.5 C794 89 792.5 98 797 100" fill="none" stroke="#2b8ff0" stroke-width="2"/><polygon points="859.5,74.8 871.5,71.0 879.5,76.0 868.1,78.4" fill="#8cc85a" stroke="#333" stroke-width="1.6" stroke-linejoin="round"/><polygon points="859.5,74.8 868.1,78.4 868.1,91.0 859.5,87.0" fill="#7ab648" stroke="#333" stroke-width="1.6" stroke-linejoin="round"/><polygon points="868.1,78.4 879.5,76.0 879.5,87.4 868.1,91.0" fill="#5f9a38" stroke="#333" stroke-width="1.6" stroke-linejoin="round"/><polygon points="847.0,85.0 859.0,81.0 867.0,86.2 855.6,88.8" fill="#f05050" stroke="#333" stroke-width="1.6" stroke-linejoin="round"/><polygon points="847.0,85.0 855.6,88.8 855.6,102.0 847.0,97.8" fill="#e23a3a" stroke="#333" stroke-width="1.6" stroke-linejoin="round"/><polygon points="855.6,88.8 867.0,86.2 867.0,98.2 855.6,102.0" fill="#b82a2a" stroke="#333" stroke-width="1.6" stroke-linejoin="round"/><polygon points="933.5,74.2 943.4,71.0 950.0,75.2 940.6,77.3" fill="#fff" stroke="#333" stroke-width="1.8" stroke-linejoin="round"/><polygon points="933.5,74.2 940.6,77.3 940.6,88.0 933.5,84.6" fill="#fff" stroke="#333" stroke-width="1.8" stroke-linejoin="round"/><polygon points="940.6,77.3 950.0,75.2 950.0,84.9 940.6,88.0" fill="#fff" stroke="#333" stroke-width="1.8" stroke-linejoin="round"/><polygon points="919.0,85.4 929.2,82.0 936.0,86.5 926.3,88.7" fill="#fff" stroke="#333" stroke-width="1.8" stroke-linejoin="round"/><polygon points="919.0,85.4 926.3,88.7 926.3,100.0 919.0,96.4" fill="#fff" stroke="#333" stroke-width="1.8" stroke-linejoin="round"/><polygon points="926.3,88.7 936.0,86.5 936.0,96.8 926.3,100.0" fill="#fff" stroke="#333" stroke-width="1.8" stroke-linejoin="round"/><path d="M936 101 C943 101 947 98 948 92.5" fill="none" stroke="#2b8ff0" stroke-width="4"/><path d="M943 93 L950 87.5 L951 96.5Z" fill="#2b8ff0"/></svg>
<div style="position:absolute;left:803.75px;top:125px;transform:translate(-50%,-50%);white-space:nowrap;font-family:'Liberation Sans', sans-serif;font-size:13px;line-height:1;color:#333;">合并零件</div>
<div style="position:absolute;left:863px;top:125px;transform:translate(-50%,-50%);white-space:nowrap;font-family:'Liberation Sans', sans-serif;font-size:13px;line-height:1;color:#333;">布尔运算</div>
<svg style="position:absolute;left:859.5px;top:145.5px;" width="7" height="4" viewBox="0 0 7 4"><path d="M0 0 H7 L3.5 3.5Z" fill="#3a5f8f"/></svg>
<div style="position:absolute;left:934px;top:125px;transform:translate(-50%,-50%);white-space:nowrap;font-family:'Liberation Sans', sans-serif;font-size:13px;line-height:1;color:#333;">壳体转为零件</div>
<div style="position:absolute;left:877.5px;top:167px;transform:translate(-50%,-50%);white-space:nowrap;font-family:'Liberation Sans', sans-serif;font-size:13px;line-height:1;color:#444;">合并&amp; 布尔运算</div>
<svg style="position:absolute;left:995px;top:68px;" width="40" height="38" viewBox="0 0 40 38"><path d="M4.5 9.0 L19.5 3.5 L31.5 10.0 L16.0 15.0Z" fill="#fff" stroke="#3a3a3a" stroke-width="1.8" stroke-linejoin="round"/><path d="M4.5 9.0 L16.0 15.0 L16.0 32.0 L4.5 25.5Z" fill="#fff" stroke="#3a3a3a" stroke-width="1.8" stroke-linejoin="round"/><path d="M16.0 15.0 L31.5 10.0 L31.5 26.0 L16.0 32.0Z" fill="#fff" stroke="#3a3a3a" stroke-width="1.8" stroke-linejoin="round"/><text x="22" y="25" font-family="Liberation Sans" font-size="10" fill="#2b8ff0">A</text></svg>
<div style="position:absolute;left:1012.6px;top:125px;transform:translate(-50%,-50%);white-space:nowrap;font-family:'Liberation Sans', sans-serif;font-size:13px;line-height:1;color:#333;">打标签</div>
<svg style="position:absolute;left:1008.5px;top:145.5px;" width="7" height="4" viewBox="0 0 7 4"><path d="M0 0 H7 L3.5 3.5Z" fill="#3a5f8f"/></svg>
<svg style="position:absolute;left:0px;top:0px;" width="1100" height="110" viewBox="0 0 1100 110"><g stroke="#2a2a2a" stroke-width="1.5" stroke-linejoin="round" fill="#fff"><path d="M1050 94.5 L1058 90 L1060.5 94 L1052 98.5Z"/><ellipse cx="1050.8" cy="96.5" rx="1.8" ry="2.2" transform="rotate(-30 1050.8 96.5)"/><path d="M1055 86 L1069.5 77.5 C1072 76.5 1074 77.5 1075.5 79.5 L1077 83.5 C1077 86 1077 88 1076 89.5 L1064 96 C1061 97 1058.5 95.5 1057 93Z"/><ellipse cx="1059.5" cy="91" rx="3.2" ry="5.2" transform="rotate(-30 1059.5 91)"/><circle cx="1078" cy="80.3" r="2.4"/></g><polygon points="1080.5,94.5 1076.8,96.1 1078.3,99.8 1074.6,98.3 1073.0,102.0 1071.4,98.3 1067.7,99.8 1069.2,96.1 1065.5,94.5 1069.2,92.9 1067.7,89.2 1071.4,90.7 1073.0,87.0 1074.6,90.7 1078.3,89.2 1076.8,92.9" fill="#f5a000"/></svg>
<div style="position:absolute;left:1065px;top:125px;transform:translate(-50%,-50%);white-space:nowrap;font-family:'Liberation Sans', sans-serif;font-size:13px;line-height:1;color:#333;">创建支柱</div>
<div style="position:absolute;left:1045px;top:167px;transform:translate(-50%,-50%);white-space:nowrap;font-family:'Liberation Sans', sans-serif;font-size:13px;line-height:1;color:#444;">生成</div>
<svg style="position:absolute;left:0px;top:0px;" width="1300" height="110" viewBox="0 0 1300 110"><polygon points="1114.0,76.9 1131.4,71.0 1143.0,78.8 1126.5,82.5" fill="none" stroke="#8e8e8e" stroke-width="1.8" stroke-linejoin="round"/><polygon points="1114.0,76.9 1126.5,82.5 1126.5,102.0 1114.0,95.8" fill="none" stroke="#8e8e8e" stroke-width="1.8" stroke-linejoin="round"/><polygon points="1126.5,82.5 1143.0,78.8 1143.0,96.4 1126.5,102.0" fill="none" stroke="#8e8e8e" stroke-width="1.8" stroke-linejoin="round"/><path d="M1118 79 L1127.5 75 L1139 80 L1129 84Z M1118 79 V95 M1129 84 V99 M1139 80 V96 M1118 95 L1129 99 L1139 96" fill="none" stroke="#8e8e8e" stroke-width="1.1"/><ellipse cx="1124" cy="89" rx="4" ry="5.5" fill="none" stroke="#8e8e8e" stroke-width="1.1"/><path d="M1131 86 C1136 88 1136 94 1132 96" fill="none" stroke="#8e8e8e" stroke-width="1.1"/><polygon points="1169.0,76.9 1186.7,71.0 1198.5,78.8 1181.7,82.5" fill="none" stroke="#8e8e8e" stroke-width="1.8" stroke-linejoin="round"/><polygon points="1169.0,76.9 1181.7,82.5 1181.7,102.0 1169.0,95.8" fill="none" stroke="#8e8e8e" stroke-width="1.8" stroke-linejoin="round"/><polygon points="1181.7,82.5 1198.5,78.8 1198.5,96.4 1181.7,102.0" fill="none" stroke="#8e8e8e" stroke-width="1.8" stroke-linejoin="round"/><path d="M1172 81 L1181.5 85 L1195.5 80 M1172 86 L1181.5 90 L1195.5 85 M1172 91 L1181.5 95 L1195.5 90 M1175 80 L1185 76 L1193 79 L1183 83Z" fill="none" stroke="#8e8e8e" stroke-width="1.2"/><polygon points="1246.0,76.9 1263.7,71.0 1275.5,78.8 1258.7,82.5" fill="none" stroke="#8e8e8e" stroke-width="1.8" stroke-linejoin="round"/><polygon points="1246.0,76.9 1258.7,82.5 1258.7,102.0 1246.0,95.8" fill="none" stroke="#8e8e8e" stroke-width="1.8" stroke-linejoin="round"/><polygon points="1258.7,82.5 1275.5,78.8 1275.5,96.4 1258.7,102.0" fill="none" stroke="#8e8e8e" stroke-width="1.8" stroke-linejoin="round"/><path d="M1246 77 L1259 88 L1275.5 79 M1259 88 L1259 102 M1259 88 L1264 71.5 M1259 88 L1246 96 M1259 88 L1275 96" fill="none" stroke="#8e8e8e" stroke-width="2.2" stroke-linecap="round"/></svg>
<div style="position:absolute;left:1128.6px;top:125px;transform:translate(-50%,-50%);white-space:nowrap;font-family:'Liberation Sans', sans-serif;font-size:13px;line-height:1;color:#9a9a9a;">结构</div>
<div style="position:absolute;left:1183.75px;top:125px;transform:translate(-50%,-50%);white-space:nowrap;font-family:'Liberation Sans', sans-serif;font-size:13px;line-height:1;color:#9a9a9a;">STL+结构</div>
<div style="position:absolute;left:1261px;top:125px;transform:translate(-50%,-50%);white-space:nowrap;font-family:'Liberation Sans', sans-serif;font-size:13px;line-height:1;color:#9a9a9a;">DSM Somos</div>
<div style="position:absolute;left:1261px;top:144.5px;transform:translate(-50%,-50%);white-space:nowrap;font-family:'Liberation Sans', sans-serif;font-size:13px;line-height:1;color:#9a9a9a;">TetraShell</div>
<div style="position:absolute;left:1207.75px;top:167px;transform:translate(-50%,-50%);white-space:nowrap;font-family:'Liberation Sans', sans-serif;font-size:13px;line-height:1;color:#444;">结构</div>
<svg style="position:absolute;left:1328px;top:71px;" width="40" height="38" viewBox="0 0 40 38"><path d="M6.8 6.9 L17.2 3.0 L25.6 7.6 L14.8 11.1Z" fill="#fff" stroke="#3a3a3a" stroke-width="1.8" stroke-linejoin="round"/><path d="M6.8 6.9 L14.8 11.1 L14.8 23.0 L6.8 18.4Z" fill="#fff" stroke="#3a3a3a" stroke-width="1.8" stroke-linejoin="round"/><path d="M14.8 11.1 L25.6 7.6 L25.6 18.8 L14.8 23.0Z" fill="#fff" stroke="#3a3a3a" stroke-width="1.8" stroke-linejoin="round"/><g fill="#c83232" stroke="#7a1a1a" stroke-width="0.8"><rect x="0" y="20" width="6" height="6"/><rect x="24" y="20" width="6" height="6"/><rect x="10" y="26" width="6" height="6"/></g></svg>
<div style="position:absolute;left:1345.4px;top:125px;transform:translate(-50%,-50%);white-space:nowrap;font-family:'Liberation Sans', sans-serif;font-size:13px;line-height:1;color:#333;">Rapidfit</div>
<svg style="position:absolute;left:1388px;top:70px;" width="40" height="38" viewBox="0 0 40 38"><path d="M9.2 3.5 L16.8 0.8 L22.8 4.0 L15.0 6.5Z" fill="#fff" stroke="#3a3a3a" stroke-width="1.8" stroke-linejoin="round"/><path d="M9.2 3.5 L15.0 6.5 L15.0 15.0 L9.2 11.8Z" fill="#fff" stroke="#3a3a3a" stroke-width="1.8" stroke-linejoin="round"/><path d="M15.0 6.5 L22.8 4.0 L22.8 12.0 L15.0 15.0Z" fill="#fff" stroke="#3a3a3a" stroke-width="1.8" stroke-linejoin="round"/><path d="M4.1 13.9 L16.9 9.3 L27.1 14.8 L13.9 19.0Z" fill="#fff" stroke="#3a3a3a" stroke-width="1.8" stroke-linejoin="round"/><path d="M4.1 13.9 L13.9 19.0 L13.9 33.5 L4.1 28.0Z" fill="#fff" stroke="#3a3a3a" stroke-width="1.8" stroke-linejoin="round"/><path d="M13.9 19.0 L27.1 14.8 L27.1 28.4 L13.9 33.5Z" fill="#fff" stroke="#3a3a3a" stroke-width="1.8" stroke-linejoin="round"/><polygon points="32.5,26.0 29.3,27.4 30.6,30.6 27.4,29.3 26.0,32.5 24.6,29.3 21.4,30.6 22.7,27.4 19.5,26.0 22.7,24.6 21.4,21.4 24.6,22.7 26.0,19.5 27.4,22.7 30.6,21.4 29.3,24.6" fill="#f5a000"/></svg>
<div style="position:absolute;left:1404.6px;top:125px;transform:translate(-50%,-50%);white-space:nowrap;font-family:'Liberation Sans', sans-serif;font-size:13px;line-height:1;color:#333;">包装保护</div>
<div style="position:absolute;left:1377.75px;top:167px;transform:translate(-50%,-50%);white-space:nowrap;font-family:'Liberation Sans', sans-serif;font-size:13px;line-height:1;color:#444;">Fit2Ship</div>
<svg style="position:absolute;left:1476px;top:71px;" width="42" height="36" viewBox="0 0 42 36"><text x="3" y="7" style="font-family:'Liberation Sans';font-weight:bold" font-size="7.5" fill="#555" textLength="32">CONCEPT</text><text x="10" y="13.5" style="font-family:'Liberation Sans';font-weight:bold" font-size="6.5" fill="#f08020">LASER</text><path d="M6 20 L16 17 L34 18 L34 28 L24 31 L6 29Z" fill="#ddd" stroke="#666" stroke-width="1"/><path d="M15 17.5 L24 19 L24 31 L15 29Z" fill="#f08020"/><path d="M6 20 L24 21 L34 18" fill="none" stroke="#666"/></svg>
<div style="position:absolute;left:1495px;top:125px;transform:translate(-50%,-50%);white-space:nowrap;font-family:'Liberation Sans', sans-serif;font-size:13px;line-height:1;color:#333;">移除‘实体’向导</div>
<div style="position:absolute;left:1502px;top:167px;transform:translate(-50%,-50%);white-space:nowrap;font-family:'Liberation Sans', sans-serif;font-size:13px;line-height:1;color:#444;">Concept Laser</div>
<svg style="position:absolute;left:1574px;top:71px;" width="36" height="34" viewBox="0 0 36 34"><g transform="translate(11,11)" fill="#2b8ff0"><circle r="8"/><g stroke="#2b8ff0" stroke-width="4"><path d="M0 -11 V11 M-11 0 H11 M-8 -8 L8 8 M8 -8 L-8 8"/></g><circle r="3.5" fill="#fff"/></g><g transform="translate(25,24)" fill="#2b8ff0"><circle r="5"/><g stroke="#2b8ff0" stroke-width="3"><path d="M0 -7.5 V7.5 M-7.5 0 H7.5 M-5.3 -5.3 L5.3 5.3 M5.3 -5.3 L-5.3 5.3"/></g><circle r="2" fill="#fff"/></g></svg>
<div style="position:absolute;left:1590.6px;top:125px;transform:translate(-50%,-50%);white-space:nowrap;font-family:'Liberation Sans', sans-serif;font-size:13px;line-height:1;color:#333;">宏命令</div>
<div style="position:absolute;left:1591px;top:167px;transform:translate(-50%,-50%);white-space:nowrap;font-family:'Liberation Sans', sans-serif;font-size:13px;line-height:1;color:#444;">混合</div>
<svg style="position:absolute;left:6px;top:186px;" width="31" height="4" viewBox="0 0 31 4"><rect x="0.0" y="1" width="2" height="2" fill="#222"/><rect x="4.4" y="1" width="2" height="2" fill="#222"/><rect x="8.8" y="1" width="2" height="2" fill="#222"/><rect x="13.2" y="1" width="2" height="2" fill="#222"/><rect x="17.6" y="1" width="2" height="2" fill="#222"/><rect x="22.0" y="1" width="2" height="2" fill="#222"/><rect x="26.4" y="1" width="2" height="2" fill="#222"/><rect x="30.8" y="1" width="2" height="2" fill="#222"/></svg>
<svg style="position:absolute;left:0px;top:0px;" width="40" height="1005" viewBox="0 0 40 1005"><path d="M20 198.6 L8.6 227.3 L31.7 220Z" fill="#7cc043" stroke="#2e3a2e" stroke-width="1.6" stroke-linejoin="round"/><path transform="translate(23.1,213.6) scale(1.15)" d="M0 0 L1 11 L3.6 8.6 L6.4 13.2 L8.2 12.2 L5.6 7.6 L8.6 6.2Z" fill="#333" stroke="#fff" stroke-width="0.6" stroke-linejoin="round"/><path d="M9.5 241.2 L30.7 234.6 L30.7 258.7 L9.5 263Z" fill="#7cc043" stroke="#2e3a2e" stroke-width="1.6" stroke-linejoin="round"/><path transform="translate(23.4,250) scale(1.15)" d="M0 0 L1 11 L3.6 8.6 L6.4 13.2 L8.2 12.2 L5.6 7.6 L8.6 6.2Z" fill="#333" stroke="#fff" stroke-width="0.6" stroke-linejoin="round"/><path d="M5.8 299 C6 290 12 286 18 283 C23 280 25 275 25.6 270.4 L34.4 270.4 C34 278 31 283 27 287 C23 291 21 294 20.5 299Z" fill="#7cc043" stroke="#2e3a2e" stroke-width="1.6" stroke-linejoin="round"/><path transform="translate(23.4,285.8) scale(1.15)" d="M0 0 L1 11 L3.6 8.6 L6.4 13.2 L8.2 12.2 L5.6 7.6 L8.6 6.2Z" fill="#333" stroke="#fff" stroke-width="0.6" stroke-linejoin="round"/><path d="M13 334.7 C5 330 4 320 7 314 C10 308 15 306.5 19.7 306.5 C25 306.5 30 309 32.5 314 C35 320 34 330 27.8 334.7Z" fill="#7cc043" stroke="#2e3a2e" stroke-width="1.6"/><path d="M14 309 C12 316 12 326 15 333 M20 307 V334 M26 309 C28 316 28 324 26 330" fill="none" stroke="#2e3a2e" stroke-width="1.4"/><path transform="translate(23.4,318.7) scale(1.15)" d="M0 0 L1 11 L3.6 8.6 L6.4 13.2 L8.2 12.2 L5.6 7.6 L8.6 6.2Z" fill="#333" stroke="#fff" stroke-width="0.6" stroke-linejoin="round"/><rect x="5.8" y="353.4" width="28.4" height="21" fill="#7cc043" stroke="#2e3a2e" stroke-width="1.6"/><line x1="23" y1="367.5" x2="31.5" y2="376" stroke="#2e3a2e" stroke-width="7" stroke-linecap="round"/><line x1="23" y1="367.5" x2="31.5" y2="376" stroke="#fff" stroke-width="4.4" stroke-linecap="round"/><path d="M12.3 413 C7.5 413 4.8 409.5 4.8 405.5 C4.8 401 8.5 397.8 12.3 397.8 C14.5 397.8 16 395.5 18.5 391.5 C19.5 387 23 384.3 26.3 384.3 C30.5 384.3 34 387.5 34 392 C34 396 31 399.5 27 400 C22 400.5 21 404 20 407 C18.5 411 16 413 12.3 413Z" fill="#7cc043" stroke="#2e3a2e" stroke-width="1.6"/><line x1="23.5" y1="403.8" x2="32" y2="412.5" stroke="#2e3a2e" stroke-width="7" stroke-linecap="round"/><line x1="23.5" y1="403.8" x2="32" y2="412.5" stroke="#fff" stroke-width="4.4" stroke-linecap="round"/><path d="M6.2 448 C13 447 18 444 21 437 C24 430 28 424 33 422.3" fill="none" stroke="#2e3a2e" stroke-width="4.4" stroke-linecap="round"/><path d="M6.2 448 C13 447 18 444 21 437 C24 430 28 424 33 422.3" fill="none" stroke="#8cc060" stroke-width="2.2" stroke-linecap="round"/><path d="M21.3 439 L33.6 450.3 M20 441 L31 451" stroke="#2e3a2e" stroke-width="1.2"/><circle cx="21.5" cy="439.5" r="2" fill="#fff" stroke="#2e3a2e" stroke-width="0.8"/><rect x="5.8" y="468.4" width="28.2" height="21" fill="#7cc043" stroke="#2e3a2e" stroke-width="1.6"/><path d="M5.8 468.4 L12.5 489.4 L19 468.4 L27 489.4 L34 468.4" fill="none" stroke="#2e3a2e" stroke-width="1.3"/><line x1="23" y1="482" x2="31.8" y2="491" stroke="#2e3a2e" stroke-width="7" stroke-linecap="round"/><line x1="23" y1="482" x2="31.8" y2="491" stroke="#fff" stroke-width="4.4" stroke-linecap="round"/><path d="M13.5 528 C9 528 5.5 524.5 5.5 520.4 C5.5 516 9 512.5 13.5 512.5 C16 512.5 18 510 19.5 506 C21 502 24 499.7 27 499.7 C31 499.7 34.5 503 34.5 507.7 C34.5 512 31 515.5 27 515.5 C23 516 22 519 21 522 C20 526 17 528 13.5 528Z" fill="#7cc043" stroke="#2e3a2e" stroke-width="1.6"/><path d="M6 520 L19 524 M13.5 512.5 L21 520 M22 504 L28 514 M27 500 L33 511" fill="none" stroke="#2e3a2e" stroke-width="1.1"/><line x1="24.5" y1="519.5" x2="32" y2="527.5" stroke="#2e3a2e" stroke-width="7" stroke-linecap="round"/><line x1="24.5" y1="519.5" x2="32" y2="527.5" stroke="#fff" stroke-width="4.4" stroke-linecap="round"/><path d="M8 542 L14 538.5 L19 543 L26 537.5 L31 546 L27 551 L33 558 L25 565 L19 562 L13 566 L6 559 L10 552Z" fill="#7cc043" stroke="#2e3a2e" stroke-width="1.6" stroke-linejoin="round"/><path d="M8 542 L19 552 L26 537.5 M19 552 L31 546 M19 552 L13 566 M19 552 L6 559 M19 552 L19 543 M19 552 L27 551" fill="none" stroke="#2e3a2e" stroke-width="1.1"/><line x1="25" y1="554.5" x2="32" y2="563" stroke="#2e3a2e" stroke-width="7" stroke-linecap="round"/><line x1="25" y1="554.5" x2="32" y2="563" stroke="#fff" stroke-width="4.4" stroke-linecap="round"/><circle cx="19.8" cy="586" r="13.8" fill="#7cc043" stroke="#2e3a2e" stroke-width="1.6"/><path d="M19.8 572.2 V599.8 M6 586 H33.6 M10 576.2 L29.6 595.8 M29.6 576.2 L10 595.8" stroke="#2e3a2e" stroke-width="1.2"/><line x1="24" y1="589" x2="32" y2="597.5" stroke="#2e3a2e" stroke-width="7" stroke-linecap="round"/><line x1="24" y1="589" x2="32" y2="597.5" stroke="#fff" stroke-width="4.4" stroke-linecap="round"/><ellipse cx="19.3" cy="622" rx="9.3" ry="13.6" fill="#7cc043" stroke="#2e3a2e" stroke-width="1.6"/><path d="M19.3 608.4 V635.6 M10 622 H28.6 M13 612 L25.6 632 M25.6 612 L13 632" stroke="#2e3a2e" stroke-width="1.1"/><line x1="24" y1="625" x2="32" y2="634" stroke="#2e3a2e" stroke-width="7" stroke-linecap="round"/><line x1="24" y1="625" x2="32" y2="634" stroke="#fff" stroke-width="4.4" stroke-linecap="round"/><path d="M6.6 659.3 L18.7 651.6 L33.0 657.0 L22.0 664.8Z" fill="#7cc043" stroke="#333" stroke-width="1.6" stroke-linejoin="round"/><path d="M6.6 659.3 L22.0 664.8 L22.0 680.2 L6.6 674.7Z" fill="#fff" stroke="#333" stroke-width="1.6" stroke-linejoin="round"/><path d="M22.0 664.8 L33.0 657.0 L33.0 672.5 L22.0 680.2Z" fill="#fff" stroke="#333" stroke-width="1.6" stroke-linejoin="round"/><path transform="translate(23,666.0) scale(1.15)" d="M0 0 L1 11 L3.6 8.6 L6.4 13.2 L8.2 12.2 L5.6 7.6 L8.6 6.2Z" fill="#333" stroke="#fff" stroke-width="0.6" stroke-linejoin="round"/><path d="M6.6 695.6 L18.7 687.9 L33.0 693.3 L22.0 701.1Z" fill="#fff" stroke="#333" stroke-width="1.6" stroke-linejoin="round"/><path d="M6.6 695.6 L22.0 701.1 L22.0 716.5 L6.6 711.0Z" fill="#7cc043" stroke="#333" stroke-width="1.6" stroke-linejoin="round"/><path d="M22.0 701.1 L33.0 693.3 L33.0 708.8 L22.0 716.5Z" fill="#7cc043" stroke="#333" stroke-width="1.6" stroke-linejoin="round"/><path transform="translate(23,702.3) scale(1.15)" d="M0 0 L1 11 L3.6 8.6 L6.4 13.2 L8.2 12.2 L5.6 7.6 L8.6 6.2Z" fill="#333" stroke="#fff" stroke-width="0.6" stroke-linejoin="round"/><path d="M6.6 731.9 L18.7 724.2 L33.0 729.6 L22.0 737.4Z" fill="#f7a21b" stroke="#333" stroke-width="1.6" stroke-linejoin="round"/><path d="M6.6 731.9 L22.0 737.4 L22.0 752.8 L6.6 747.3Z" fill="#7cc043" stroke="#333" stroke-width="1.6" stroke-linejoin="round"/><path d="M22.0 737.4 L33.0 729.6 L33.0 745.1 L22.0 752.8Z" fill="#2b8ff0" stroke="#333" stroke-width="1.6" stroke-linejoin="round"/><path transform="translate(23,738.6) scale(1.15)" d="M0 0 L1 11 L3.6 8.6 L6.4 13.2 L8.2 12.2 L5.6 7.6 L8.6 6.2Z" fill="#333" stroke="#fff" stroke-width="0.6" stroke-linejoin="round"/><path d="M6.6 768.1 L18.7 760.4 L33.0 765.8 L22.0 773.6Z" fill="#fff" stroke="#9a9a9a" stroke-width="1.6" stroke-linejoin="round"/><path d="M6.6 768.1 L22.0 773.6 L22.0 789.0 L6.6 783.5Z" fill="#fff" stroke="#9a9a9a" stroke-width="1.6" stroke-linejoin="round"/><path d="M22.0 773.6 L33.0 765.8 L33.0 781.3 L22.0 789.0Z" fill="#f4f4f4" stroke="#9a9a9a" stroke-width="1.6" stroke-linejoin="round"/><path d="M24 778 L31 774 M24 782 L31 778" stroke="#c8c8c8" stroke-width="1"/><path transform="translate(23,774.8) scale(1.15)" d="M0 0 L1 11 L3.6 8.6 L6.4 13.2 L8.2 12.2 L5.6 7.6 L8.6 6.2Z" fill="#9a9a9a" stroke="#fff" stroke-width="0.6" stroke-linejoin="round"/><path d="M6.6 804.3 L18.7 796.6 L33.0 802.0 L22.0 809.8Z" fill="#fff" stroke="#333" stroke-width="1.6" stroke-linejoin="round"/><path d="M6.6 804.3 L22.0 809.8 L22.0 825.2 L6.6 819.7Z" fill="#fff" stroke="#333" stroke-width="1.6" stroke-linejoin="round"/><path d="M22.0 809.8 L33.0 802.0 L33.0 817.5 L22.0 825.2Z" fill="#fff" stroke="#333" stroke-width="1.6" stroke-linejoin="round"/><path d="M9 808 L20 804 L27 812 L19 822 L11 818Z" fill="#7cc043" stroke="#2e3a2e" stroke-width="0.8"/><path d="M13 808 L19 806 L22 811 L18 815 L13 813Z" fill="#e23030"/><path transform="translate(23,811.0) scale(1.15)" d="M0 0 L1 11 L3.6 8.6 L6.4 13.2 L8.2 12.2 L5.6 7.6 L8.6 6.2Z" fill="#333" stroke="#fff" stroke-width="0.6" stroke-linejoin="round"/><path d="M6.6 840.7 L18.7 833.0 L33.0 838.4 L22.0 846.2Z" fill="#7cc043" stroke="#333" stroke-width="1.6" stroke-linejoin="round"/><path d="M6.6 840.7 L22.0 846.2 L22.0 861.6 L6.6 856.1Z" fill="#7cc043" stroke="#333" stroke-width="1.6" stroke-linejoin="round"/><path d="M22.0 846.2 L33.0 838.4 L33.0 853.9 L22.0 861.6Z" fill="#7cc043" stroke="#333" stroke-width="1.6" stroke-linejoin="round"/><path d="M9 849 L13 851 M17 838 L22 839" stroke="#333" stroke-width="1.4"/><path transform="translate(23,847.4) scale(1.15)" d="M0 0 L1 11 L3.6 8.6 L6.4 13.2 L8.2 12.2 L5.6 7.6 L8.6 6.2Z" fill="#333" stroke="#fff" stroke-width="0.6" stroke-linejoin="round"/><path d="M20.2 874.5 L8.2 903.2 L31.4 894.3Z" fill="#c8c8c8" stroke="#9a9a9a" stroke-width="1.8" stroke-linejoin="round"/><path transform="translate(23.2,889.6) scale(1.0)" d="M0 0 L1 11 L3.6 8.6 L6.4 13.2 L8.2 12.2 L5.6 7.6 L8.6 6.2Z" fill="#a0a0a0" stroke="#fff" stroke-width="0.6" stroke-linejoin="round"/><path d="M20.2 910.7 L8.2 939.4 L31.4 930.5Z" fill="#c8c8c8" stroke="#9a9a9a" stroke-width="1.8" stroke-linejoin="round"/><path d="M19.5 920 L13.5 934 L25.5 929.5Z" fill="#d6d6d6" stroke="#9a9a9a" stroke-width="1.4" stroke-linejoin="round"/><path d="M22.5 922 C24 916 28 911 34 910.5 C31 913 30 916 33 918 C29 918 27 921 25 924Z" fill="#b0b0b0"/><path d="M20.2 946.2 L8.2 974.8 L31.4 966.6Z" fill="#c8c8c8" stroke="#9a9a9a" stroke-width="1.8" stroke-linejoin="round"/><path d="M19.5 955.5 L13.5 969.5 L25.5 965Z" fill="#d6d6d6" stroke="#9a9a9a" stroke-width="1.4" stroke-linejoin="round"/><path d="M24 960 L29 954 L27 952 L34.8 946.5 L34 955 L32 953 L27 962Z" fill="#b0b0b0"/></svg>
<div style="position:absolute;left:5px;top:342px;width:32px;height:1px;background:#e6e6e6"></div>
<div style="position:absolute;left:5px;top:457px;width:32px;height:1px;background:#e6e6e6"></div>
<div style="position:absolute;left:5px;top:644px;width:32px;height:1px;background:#e6e6e6"></div>
<div style="position:absolute;left:5px;top:867px;width:32px;height:1px;background:#e6e6e6"></div>
<svg style="position:absolute;left:16px;top:990px;" width="9" height="11" viewBox="0 0 9 11"><path d="M2.2 2.5 L4.5 5 L6.8 2.5 M2.2 6 L4.5 8.5 L6.8 6" fill="none" stroke="#000" stroke-width="1.8" stroke-linecap="round"/></svg>
<svg style="position:absolute;left:56px;top:187px;" width="21" height="19" viewBox="0 0 21 19"><path d="M0 12 L6 9 L20 9 L20 19 L0 19Z" fill="#b8d4f4" stroke="#6aa0dc" stroke-width="0.8"/><circle cx="5" cy="5" r="4.5" fill="#2e6bb8"/><path d="M15 0 L19 8 H11Z" fill="#2e6bb8"/><path d="M9 10 L15 8 L19 10 L19 17 L13 19 L9 17Z" fill="#1e4f90"/></svg>
<div style="position:absolute;left:81px;top:198px;transform:translate(0,-50%);white-space:nowrap;font-family:'Liberation Sans', sans-serif;font-size:14.6px;line-height:1;color:#111;">设计者视图</div>
<div style="position:absolute;left:170px;top:185px;width:131px;height:27px;border:1px solid #bdbdbd;border-bottom:none;background:#fff;box-sizing:border-box"></div>
<svg style="position:absolute;left:185px;top:186px;" width="20" height="20" viewBox="0 0 20 20"><defs><linearGradient id="tg" x1="0" y1="0" x2="0" y2="1"><stop offset="0" stop-color="#9a9a9a"/><stop offset="1" stop-color="#e8e8e8"/></linearGradient></defs><rect x="0" y="0" width="20" height="9" fill="url(#tg)"/><rect x="0" y="9" width="20" height="8" fill="#8fb03a"/><circle cx="6" cy="11" r="3" fill="#3c6aa8"/><circle cx="13" cy="10" r="3" fill="#3c6aa8"/><path d="M17 5 L20 11 H14Z" fill="#3c6aa8"/><rect x="9" y="17" width="2" height="3" fill="#555"/></svg>
<div style="position:absolute;left:209.5px;top:198px;transform:translate(0,-50%);white-space:nowrap;font-family:'Liberation Sans', sans-serif;font-size:14.6px;line-height:1;color:#111;">联泰<span style="font-family:Liberation Mono;font-size:12.6px">SLA600</span></div>
<svg style="position:absolute;left:0;top:0" width="1919" height="1026" viewBox="0 0 1919 1026"><defs><pattern id="mesh" width="5" height="5" patternUnits="userSpaceOnUse"><rect width="5" height="5" fill="#c4c4c4"/><path d="M0 0 L5 5 M5 0 L0 5" stroke="#8d8d8d" stroke-width="0.9"/></pattern><pattern id="mesh2" width="4" height="4" patternUnits="userSpaceOnUse"><rect width="4" height="4" fill="#bababa"/><path d="M0 0 L4 4 M4 0 L0 4" stroke="#888" stroke-width="0.8"/></pattern><linearGradient id="rul" x1="0" y1="0" x2="0" y2="1"><stop offset="0" stop-color="#f8f8f8"/><stop offset="1" stop-color="#ededed"/></linearGradient></defs><rect x="41" y="211" width="1344" height="794" fill="#eeeeee"/><polygon points="178.3,739.4 554,608.5 1136.8,674 762,804.3" fill="#fff"/><line x1="167.6" y1="299.6" x2="178.3" y2="739.4" stroke="#3c8fe0" stroke-width="1.3"/><line x1="167.6" y1="299.6" x2="751.4" y2="362.9" stroke="#3c8fe0" stroke-width="1.3"/><line x1="751.4" y1="362.9" x2="1125" y2="231.6" stroke="#3c8fe0" stroke-width="1.3"/><line x1="1125" y1="231.6" x2="1136.8" y2="674" stroke="#3c8fe0" stroke-width="1.3"/><line x1="1136.8" y1="674" x2="762" y2="804.3" stroke="#3c8fe0" stroke-width="1.3"/><line x1="762" y1="804.3" x2="178.3" y2="739.4" stroke="#3c8fe0" stroke-width="1.3"/><line x1="167.6" y1="299.6" x2="419" y2="211" stroke="#3c8fe0" stroke-width="1.3"/><line x1="1125" y1="231.6" x2="929.5" y2="211" stroke="#3c8fe0" stroke-width="1.3"/><line x1="542.4" y1="211" x2="554" y2="608.5" stroke="#3c8fe0" stroke-width="1.3"/><line x1="554" y1="608.5" x2="178.3" y2="739.4" stroke="#8cc0ef" stroke-width="0.9"/><line x1="554" y1="608.5" x2="1136.8" y2="674" stroke="#8cc0ef" stroke-width="0.9"/><defs><filter id="nz" x="0" y="0" width="1" height="1" color-interpolation-filters="sRGB"><feTurbulence type="fractalNoise" baseFrequency="0.8 0.2" numOctaves="2" seed="3" result="t"/><feColorMatrix in="t" type="matrix" values="0.55 0 0 0 0.42  0.55 0 0 0 0.42  0.55 0 0 0 0.42  0 0 0 0 1" result="g"/><feComposite in="g" in2="SourceAlpha" operator="in"/></filter><filter id="nzb" x="0" y="0" width="1" height="1" color-interpolation-filters="sRGB"><feTurbulence type="fractalNoise" baseFrequency="0.3 0.9" numOctaves="2" seed="11" result="t"/><feColorMatrix in="t" type="matrix" values="0.55 0 0 0 0.39  0.55 0 0 0 0.39  0.55 0 0 0 0.39  0 0 0 0 1" result="g"/><feComposite in="g" in2="SourceAlpha" operator="in"/></filter></defs><polygon points="442,560 611,541 681,520 692,512 700,505 708,492 708,470 736,470 736,681 725,681 725,718.6 658,718.6 656,709 520,719 440,724 440,606 442,604" fill="#aaa" filter="url(#nz)"/><rect x="499" y="560" width="3" height="41" fill="#f2f2f2"/><rect x="519" y="558" width="3" height="37" fill="#f2f2f2"/><rect x="566" y="553" width="3" height="36" fill="#f2f2f2"/><rect x="550" y="571" width="3" height="18" fill="#cfe0f4"/><polygon points="727,430 745,429 748,440 738,447 727,455" fill="#aaa" filter="url(#nz)"/><path d="M699.5 334 C708 345 722 353 732 361 C742 369 750 376 755 383 L758.5 381.5 C760 388 760.5 396 760 402 L759 409.5 C770 407 781 409 786 413 C791 421 793 432 790.5 445 C797 448 803 451 806 455 C811 461 815 471 814 481 L810 490 L790 490 L766 500 L766 594 L772 640 L790 670 L770 672 L741 665 L738.6 625.5 L734 612 L736 509 L714 490 L700 498 L680 512 L662 527 L655 522 L661.4 515 L673 499 L679 491.6 C688 483 694 479 698.5 476 L714 466 L716 458.4 C720 455 722 454.5 724 454 L737.5 446.7 L749 437 C741 431 734 424 728 414 C721 404 715 395 713 387.3 L714 376.5 C708 373 704 369 702 365.2 L708 357 C704 350 701 342 699.5 334Z" fill="#c8c8c8" stroke="#4a4a4a" stroke-width="1"/><path d="M757 410 C765 414 775 420 781 432 C784 440 784 444 782 447 M741 412 C752 409 760 409 765 412 M749 437 C758 444 770 446 790 445 M737 447 C748 470 752 490 762 500 M716 460 C725 465 735 470 736 480" fill="none" stroke="#5e5e5e" stroke-width="0.9"/><path d="M740 560 C746 580 742 600 748 640 M754 560 C760 590 758 610 768 650" fill="none" stroke="#a0a0a0" stroke-width="1"/><path d="M712 356 C724 368 738 380 748 398 M764 418 C772 420 778 428 780 438 M700 482 C690 490 680 500 670 512" fill="none" stroke="#e6e6e6" stroke-width="2.2" opacity="0.75"/><path d="M744 652 L753 652 L750 639Z" fill="#f4f4f4"/><polygon points="708,462 735,458 752,498 750.8,523 736.6,548.7 733.8,599.6 739.5,622 741,650 742,668 726,681 725,690 700,690 700,520 708,520" fill="#aaa" filter="url(#nz)"/><polygon points="763.5,452.6 790,455 811.6,495 814.4,523 825.7,543 828.5,571 834,577 837,599.6 842.6,625 850,645 877.6,679 883,693 883,697 864,702 866,705 826,717.4 797,718.6 797,681 789,668 773,640 766.3,613.7 760.7,588 760.7,514.8" fill="#aaa" filter="url(#nzb)"/><path d="M442 558 L646 531 L646 533.5 L443 561Z" fill="#5a5a5a"/><path d="M578 530 L598 524 L641 516 L648 522 L646 529 L611 538 L580 536Z" fill="#c2c2c2" stroke="#404040" stroke-width="0.9"/><path d="M583 532 L640 522" stroke="#e6e6c0" stroke-width="1.2"/><polygon points="722,700 799,700 799,715 722,716" fill="#aaa" filter="url(#nz)"/><path d="M724 681.6 L729 667 L740 654 L783 652 L794.6 670 L797 681.6Z" fill="#333"/><path d="M762 668 C770 660 780 662 788 670 C782 676 770 677 762 674Z" fill="#cfcfcf" stroke="#555" stroke-width="0.8"/><path d="M741 655 C746 652 752 653 755 657 C752 662 745 663 741 660Z" fill="#cfcfcf" stroke="#666" stroke-width="0.7"/><path d="M724 681.6 L797 681.6 L797 705.6 L724 705.6Z" fill="#d2d2d2"/><path d="M745 682 V705 M776 682 V705" stroke="#c0c0c0" stroke-width="1"/><path d="M724 706 L797 706" stroke="#3aa090" stroke-width="1.5"/><text x="762" y="696" style="font-family:'Liberation Serif';font-weight:bold" font-size="12" fill="#2a4ad0">z</text><path d="M443.0 561.4 l1.2 7 l1.2 -7" stroke="#3434d0" stroke-width="0.7" fill="none" opacity="0.8"/><path d="M446.6 560.9 l1.2 7 l1.2 -7" stroke="#3434d0" stroke-width="0.7" fill="none" opacity="0.8"/><path d="M450.2 560.4 l1.2 7 l1.2 -7" stroke="#3434d0" stroke-width="0.7" fill="none" opacity="0.8"/><path d="M453.8 559.9 l1.2 7 l1.2 -7" stroke="#3434d0" stroke-width="0.7" fill="none" opacity="0.8"/><path d="M457.4 559.5 l1.2 7 l1.2 -7" stroke="#3434d0" stroke-width="0.7" fill="none" opacity="0.8"/><path d="M461.0 559.0 l1.2 7 l1.2 -7" stroke="#3434d0" stroke-width="0.7" fill="none" opacity="0.8"/><path d="M464.6 558.5 l1.2 7 l1.2 -7" stroke="#3434d0" stroke-width="0.7" fill="none" opacity="0.8"/><path d="M468.2 558.0 l1.2 7 l1.2 -7" stroke="#3434d0" stroke-width="0.7" fill="none" opacity="0.8"/><path d="M471.8 557.6 l1.2 7 l1.2 -7" stroke="#3434d0" stroke-width="0.7" fill="none" opacity="0.8"/><path d="M475.4 557.1 l1.2 7 l1.2 -7" stroke="#3434d0" stroke-width="0.7" fill="none" opacity="0.8"/><path d="M479.0 556.6 l1.2 7 l1.2 -7" stroke="#3434d0" stroke-width="0.7" fill="none" opacity="0.8"/><path d="M482.6 556.1 l1.2 7 l1.2 -7" stroke="#3434d0" stroke-width="0.7" fill="none" opacity="0.8"/><path d="M486.2 555.7 l1.2 7 l1.2 -7" stroke="#3434d0" stroke-width="0.7" fill="none" opacity="0.8"/><path d="M489.8 555.2 l1.2 7 l1.2 -7" stroke="#3434d0" stroke-width="0.7" fill="none" opacity="0.8"/><path d="M493.4 554.7 l1.2 7 l1.2 -7" stroke="#3434d0" stroke-width="0.7" fill="none" opacity="0.8"/><path d="M497.0 554.2 l1.2 7 l1.2 -7" stroke="#3434d0" stroke-width="0.7" fill="none" opacity="0.8"/><path d="M500.6 553.8 l1.2 7 l1.2 -7" stroke="#3434d0" stroke-width="0.7" fill="none" opacity="0.8"/><path d="M504.2 553.3 l1.2 7 l1.2 -7" stroke="#3434d0" stroke-width="0.7" fill="none" opacity="0.8"/><path d="M507.8 552.8 l1.2 7 l1.2 -7" stroke="#3434d0" stroke-width="0.7" fill="none" opacity="0.8"/><path d="M511.4 552.3 l1.2 7 l1.2 -7" stroke="#3434d0" stroke-width="0.7" fill="none" opacity="0.8"/><path d="M515.0 551.9 l1.2 7 l1.2 -7" stroke="#3434d0" stroke-width="0.7" fill="none" opacity="0.8"/><path d="M518.6 551.4 l1.2 7 l1.2 -7" stroke="#3434d0" stroke-width="0.7" fill="none" opacity="0.8"/><path d="M522.2 550.9 l1.2 7 l1.2 -7" stroke="#3434d0" stroke-width="0.7" fill="none" opacity="0.8"/><path d="M525.8 550.4 l1.2 7 l1.2 -7" stroke="#3434d0" stroke-width="0.7" fill="none" opacity="0.8"/><path d="M529.4 550.0 l1.2 7 l1.2 -7" stroke="#3434d0" stroke-width="0.7" fill="none" opacity="0.8"/><path d="M533.0 549.5 l1.2 7 l1.2 -7" stroke="#3434d0" stroke-width="0.7" fill="none" opacity="0.8"/><path d="M536.6 549.0 l1.2 7 l1.2 -7" stroke="#3434d0" stroke-width="0.7" fill="none" opacity="0.8"/><path d="M540.2 548.5 l1.2 7 l1.2 -7" stroke="#3434d0" stroke-width="0.7" fill="none" opacity="0.8"/><path d="M543.8 548.1 l1.2 7 l1.2 -7" stroke="#3434d0" stroke-width="0.7" fill="none" opacity="0.8"/><path d="M547.4 547.6 l1.2 7 l1.2 -7" stroke="#3434d0" stroke-width="0.7" fill="none" opacity="0.8"/><path d="M551.0 547.1 l1.2 7 l1.2 -7" stroke="#3434d0" stroke-width="0.7" fill="none" opacity="0.8"/><path d="M554.6 546.6 l1.2 7 l1.2 -7" stroke="#3434d0" stroke-width="0.7" fill="none" opacity="0.8"/><path d="M558.2 546.2 l1.2 7 l1.2 -7" stroke="#3434d0" stroke-width="0.7" fill="none" opacity="0.8"/><path d="M561.8 545.7 l1.2 7 l1.2 -7" stroke="#3434d0" stroke-width="0.7" fill="none" opacity="0.8"/><path d="M565.4 545.2 l1.2 7 l1.2 -7" stroke="#3434d0" stroke-width="0.7" fill="none" opacity="0.8"/><path d="M569.0 544.7 l1.2 7 l1.2 -7" stroke="#3434d0" stroke-width="0.7" fill="none" opacity="0.8"/><path d="M572.6 544.3 l1.2 7 l1.2 -7" stroke="#3434d0" stroke-width="0.7" fill="none" opacity="0.8"/><path d="M576.2 543.8 l1.2 7 l1.2 -7" stroke="#3434d0" stroke-width="0.7" fill="none" opacity="0.8"/><path d="M579.8 543.3 l1.2 7 l1.2 -7" stroke="#3434d0" stroke-width="0.7" fill="none" opacity="0.8"/><path d="M583.4 542.8 l1.2 7 l1.2 -7" stroke="#3434d0" stroke-width="0.7" fill="none" opacity="0.8"/><path d="M587.0 542.4 l1.2 7 l1.2 -7" stroke="#3434d0" stroke-width="0.7" fill="none" opacity="0.8"/><path d="M590.6 541.9 l1.2 7 l1.2 -7" stroke="#3434d0" stroke-width="0.7" fill="none" opacity="0.8"/><path d="M594.2 541.4 l1.2 7 l1.2 -7" stroke="#3434d0" stroke-width="0.7" fill="none" opacity="0.8"/><path d="M597.8 540.9 l1.2 7 l1.2 -7" stroke="#3434d0" stroke-width="0.7" fill="none" opacity="0.8"/><path d="M601.4 540.5 l1.2 7 l1.2 -7" stroke="#3434d0" stroke-width="0.7" fill="none" opacity="0.8"/><path d="M605.0 540.0 l1.2 7 l1.2 -7" stroke="#3434d0" stroke-width="0.7" fill="none" opacity="0.8"/><path d="M608.6 539.5 l1.2 7 l1.2 -7" stroke="#3434d0" stroke-width="0.7" fill="none" opacity="0.8"/><path d="M612.2 539.0 l1.2 7 l1.2 -7" stroke="#3434d0" stroke-width="0.7" fill="none" opacity="0.8"/><path d="M615.8 538.6 l1.2 7 l1.2 -7" stroke="#3434d0" stroke-width="0.7" fill="none" opacity="0.8"/><path d="M619.4 538.1 l1.2 7 l1.2 -7" stroke="#3434d0" stroke-width="0.7" fill="none" opacity="0.8"/><path d="M623.0 537.6 l1.2 7 l1.2 -7" stroke="#3434d0" stroke-width="0.7" fill="none" opacity="0.8"/><path d="M626.6 537.1 l1.2 7 l1.2 -7" stroke="#3434d0" stroke-width="0.7" fill="none" opacity="0.8"/><path d="M630.2 536.7 l1.2 7 l1.2 -7" stroke="#3434d0" stroke-width="0.7" fill="none" opacity="0.8"/><path d="M633.8 536.2 l1.2 7 l1.2 -7" stroke="#3434d0" stroke-width="0.7" fill="none" opacity="0.8"/><path d="M637.4 535.7 l1.2 7 l1.2 -7" stroke="#3434d0" stroke-width="0.7" fill="none" opacity="0.8"/><path d="M650 536 l0.9 4 l0.9 -4" stroke="#3030c0" stroke-width="0.7" fill="none"/><path d="M657 533 l0.9 4 l0.9 -4" stroke="#3030c0" stroke-width="0.7" fill="none"/><path d="M664 530 l0.9 4 l0.9 -4" stroke="#3030c0" stroke-width="0.7" fill="none"/><path d="M672 524 l0.9 4 l0.9 -4" stroke="#3030c0" stroke-width="0.7" fill="none"/><path d="M676 520 l0.9 4 l0.9 -4" stroke="#3030c0" stroke-width="0.7" fill="none"/><path d="M684 514 l0.9 4 l0.9 -4" stroke="#3030c0" stroke-width="0.7" fill="none"/><path d="M690 510 l0.9 4 l0.9 -4" stroke="#3030c0" stroke-width="0.7" fill="none"/><path d="M697 504 l0.9 4 l0.9 -4" stroke="#3030c0" stroke-width="0.7" fill="none"/><path d="M703 497 l0.9 4 l0.9 -4" stroke="#3030c0" stroke-width="0.7" fill="none"/><path d="M706 492 l0.9 4 l0.9 -4" stroke="#3030c0" stroke-width="0.7" fill="none"/><path d="M711 487 l0.9 4 l0.9 -4" stroke="#3030c0" stroke-width="0.7" fill="none"/><path d="M722 495 l0.9 4 l0.9 -4" stroke="#3030c0" stroke-width="0.7" fill="none"/><path d="M716 470 l0.9 4 l0.9 -4" stroke="#3030c0" stroke-width="0.7" fill="none"/><path d="M730 462 l0.9 4 l0.9 -4" stroke="#3030c0" stroke-width="0.7" fill="none"/><path d="M781 456 l0.9 4 l0.9 -4" stroke="#3030c0" stroke-width="0.7" fill="none"/><path d="M788 458 l0.9 4 l0.9 -4" stroke="#3030c0" stroke-width="0.7" fill="none"/><path d="M793 462 l0.9 4 l0.9 -4" stroke="#3030c0" stroke-width="0.7" fill="none"/><path d="M798 478 l0.9 4 l0.9 -4" stroke="#3030c0" stroke-width="0.7" fill="none"/><path d="M803 482 l0.9 4 l0.9 -4" stroke="#3030c0" stroke-width="0.7" fill="none"/><path d="M808 472 l0.9 4 l0.9 -4" stroke="#3030c0" stroke-width="0.7" fill="none"/><path d="M745 455 l0.9 4 l0.9 -4" stroke="#3030c0" stroke-width="0.7" fill="none"/><path d="M752 448 l0.9 4 l0.9 -4" stroke="#3030c0" stroke-width="0.7" fill="none"/><path d="M770 458 l0.9 4 l0.9 -4" stroke="#3030c0" stroke-width="0.7" fill="none"/><path d="M775 462 l0.9 4 l0.9 -4" stroke="#3030c0" stroke-width="0.7" fill="none"/><path d="M720 468 l0.9 4 l0.9 -4" stroke="#3030c0" stroke-width="0.7" fill="none"/><circle cx="653" cy="529.5" r="3.2" fill="#fff" stroke="#222" stroke-width="1"/><circle cx="679" cy="568.5" r="3.2" fill="#fff" stroke="#222" stroke-width="1"/><line x1="751.4" y1="362.9" x2="762" y2="804.3" stroke="#3c8fe0" stroke-width="1.3"/><line x1="167.6" y1="299.6" x2="751.4" y2="362.9" stroke="#3c8fe0" stroke-width="1.3"/><line x1="761" y1="700" x2="762.5" y2="804.3" stroke="#2a5ee0" stroke-width="2"/><line x1="762.5" y1="804.5" x2="658" y2="793" stroke="#6ccf3a" stroke-width="2.2"/><line x1="762.5" y1="804.5" x2="830.5" y2="781" stroke="#c81e1e" stroke-width="2.2"/><text x="660" y="803" font-family="Liberation Serif" font-weight="bold" font-size="12" fill="#6ccf3a">y</text><text x="832" y="792" font-family="Liberation Serif" font-weight="bold" font-size="12" fill="#c81e1e">x</text><rect x="765.5" y="815.5" width="28" height="19" fill="none" stroke="#222" stroke-width="1"/><text x="767.5" y="830" font-family="Liberation Mono" font-size="12.5" fill="#222" textLength="24">WCS</text><line x1="1285.3" y1="861.5" x2="1283.5" y2="791.6" stroke="#3a6ad0" stroke-width="1.3"/><line x1="1285.3" y1="861.5" x2="1222" y2="854" stroke="#8cd050" stroke-width="1.3"/><line x1="1285.3" y1="861.5" x2="1325" y2="846.3" stroke="#d03030" stroke-width="1.3"/><text x="1282" y="792" font-family="Liberation Serif" font-size="12" fill="#3a5ac0">Z</text><text x="1213" y="865" font-family="Liberation Serif" font-size="12" fill="#8cd050">Y</text><text x="1328.5" y="857.5" font-family="Liberation Serif" font-size="12" fill="#c02020">X</text><rect x="41" y="960" width="1344" height="45" fill="url(#rul)"/><rect x="41" y="1002" width="1344" height="3" fill="#e6f2fb"/><line x1="41" y1="960.5" x2="1385" y2="960.5" stroke="#444" stroke-width="1"/><path d="M41.5 960 V974 M52.5 960 V965 M64.5 960 V965 M75.5 960 V965 M87.5 960 V965 M99.5 960 V969 M110.5 960 V965 M122.5 960 V965 M133.5 960 V965 M145.5 960 V965 M156.5 960 V974 M168.5 960 V965 M179.5 960 V965 M191.5 960 V965 M203.5 960 V965 M214.5 960 V969 M226.5 960 V965 M237.5 960 V965 M249.5 960 V965 M260.5 960 V965 M272.5 960 V974 M283.5 960 V965 M295.5 960 V965 M307.5 960 V965 M318.5 960 V965 M330.5 960 V969 M341.5 960 V965 M353.5 960 V965 M364.5 960 V965 M376.5 960 V965 M388.5 960 V974 M399.5 960 V965 M411.5 960 V965 M422.5 960 V965 M434.5 960 V965 M445.5 960 V969 M457.5 960 V965 M468.5 960 V965 M480.5 960 V965 M492.5 960 V965 M503.5 960 V974 M515.5 960 V965 M526.5 960 V965 M538.5 960 V965 M549.5 960 V965 M561.5 960 V969 M572.5 960 V965 M584.5 960 V965 M596.5 960 V965 M607.5 960 V965 M619.5 960 V974 M630.5 960 V965 M642.5 960 V965 M653.5 960 V965 M665.5 960 V965 M677.5 960 V969 M688.5 960 V965 M700.5 960 V965 M711.5 960 V965 M723.5 960 V965 M734.5 960 V974 M746.5 960 V965 M757.5 960 V965 M769.5 960 V965 M781.5 960 V965 M792.5 960 V969 M804.5 960 V965 M815.5 960 V965 M827.5 960 V965 M838.5 960 V965 M850.5 960 V974 M861.5 960 V965 M873.5 960 V965 M885.5 960 V965 M896.5 960 V965 M908.5 960 V969 M919.5 960 V965 M931.5 960 V965 M942.5 960 V965 M954.5 960 V965 M966.5 960 V974 M977.5 960 V965 M989.5 960 V965 M1000.5 960 V965 M1012.5 960 V965 M1023.5 960 V969 M1035.5 960 V965 M1046.5 960 V965 M1058.5 960 V965 M1070.5 960 V965 M1081.5 960 V974 M1093.5 960 V965 M1104.5 960 V965 M1116.5 960 V965 M1127.5 960 V965 M1139.5 960 V969 M1150.5 960 V965 M1162.5 960 V965 M1174.5 960 V965 M1185.5 960 V965 M1197.5 960 V974 M1208.5 960 V965 M1220.5 960 V965 M1231.5 960 V965 M1243.5 960 V965 M1255.5 960 V969 M1266.5 960 V965 M1278.5 960 V965 M1289.5 960 V965 M1301.5 960 V965 M1312.5 960 V974 M1324.5 960 V965 M1335.5 960 V965 M1347.5 960 V965 M1359.5 960 V965 M1370.5 960 V969 M1382.5 960 V965" stroke="#333" stroke-width="1" shape-rendering="crispEdges"/><text x="48.0" y="993" text-anchor="middle" style="font-family:'Liberation Sans';font-weight:bold" font-size="16" fill="#000">0</text><text x="155.6" y="993" text-anchor="middle" style="font-family:'Liberation Sans';font-weight:bold" font-size="16" fill="#000">1</text><text x="271.2" y="993" text-anchor="middle" style="font-family:'Liberation Sans';font-weight:bold" font-size="16" fill="#000">2</text><text x="386.8" y="993" text-anchor="middle" style="font-family:'Liberation Sans';font-weight:bold" font-size="16" fill="#000">3</text><text x="502.4" y="993" text-anchor="middle" style="font-family:'Liberation Sans';font-weight:bold" font-size="16" fill="#000">4</text><text x="618.0" y="993" text-anchor="middle" style="font-family:'Liberation Sans';font-weight:bold" font-size="16" fill="#000">5</text><text x="733.6" y="993" text-anchor="middle" style="font-family:'Liberation Sans';font-weight:bold" font-size="16" fill="#000">6</text><text x="849.2" y="993" text-anchor="middle" style="font-family:'Liberation Sans';font-weight:bold" font-size="16" fill="#000">7</text><text x="964.8" y="993" text-anchor="middle" style="font-family:'Liberation Sans';font-weight:bold" font-size="16" fill="#000">8</text><text x="1080.4" y="993" text-anchor="middle" style="font-family:'Liberation Sans';font-weight:bold" font-size="16" fill="#000">9</text><text x="1196.0" y="993" text-anchor="middle" style="font-family:'Liberation Sans';font-weight:bold" font-size="16" fill="#000">10</text><text x="1311.6" y="993" text-anchor="middle" style="font-family:'Liberation Sans';font-weight:bold" font-size="16" fill="#000">11</text><text x="1360" y="989" text-anchor="middle" style="font-family:'Liberation Sans';font-weight:bold" font-size="15" fill="#000">dm</text><path d="M1385 585.5 L1389.5 589.2 L1385 593Z M1385 594 L1389.5 597.6 L1385 601.2Z" fill="#333"/></svg>
<div style="position:absolute;left:1390px;top:182px;width:1px;height:278px;background:#e8e8e8"></div>
<div style="position:absolute;left:1390px;top:460px;width:1px;height:545px;background:#f8f8f8"></div>
<svg style="position:absolute;left:0px;top:0px;" width="1919" height="1026" viewBox="0 0 1919 1026"><path d="M1401 191.5 L1408 197.5 L1401 203.5Z" fill="#111"/><defs><pattern id="dp195" x="1505" y="195" width="4" height="4" patternUnits="userSpaceOnUse"><rect width="1" height="1" fill="#000"/><rect x="2" y="2" width="1" height="1" fill="#000"/></pattern></defs><rect x="1505" y="195" width="385" height="5" fill="url(#dp195)"/><path d="M1902 195.0 L1908 200.0 M1908 195.0 L1902 200.0" stroke="#000" stroke-width="1.8"/><line x1="1391" y1="238.5" x2="1919" y2="238.5" stroke="#e4e4e4" stroke-width="1"/><path d="M1393.5 237 V216.5 H1497.5 V237" fill="none" stroke="#9a9a9a" stroke-width="1"/><path d="M1401 246 L1408 252 L1401 258Z" fill="#111"/><defs><pattern id="dp250" x="1505" y="250" width="4" height="4" patternUnits="userSpaceOnUse"><rect width="1" height="1" fill="#000"/><rect x="2" y="2" width="1" height="1" fill="#000"/></pattern></defs><rect x="1505" y="250" width="385" height="5" fill="url(#dp250)"/><path d="M1902 249.5 L1908 254.5 M1908 249.5 L1902 254.5" stroke="#000" stroke-width="1.8"/><line x1="1391" y1="293.5" x2="1919" y2="293.5" stroke="#e4e4e4" stroke-width="1"/><path d="M1393.5 292 V271.5 H1481.5 V292" fill="none" stroke="#9a9a9a" stroke-width="1"/><path d="M1401 301 L1408 307 L1401 313Z" fill="#111"/><defs><pattern id="dp304" x="1505" y="304" width="4" height="4" patternUnits="userSpaceOnUse"><rect width="1" height="1" fill="#000"/><rect x="2" y="2" width="1" height="1" fill="#000"/></pattern></defs><rect x="1505" y="304" width="385" height="5" fill="url(#dp304)"/><path d="M1902 304.5 L1908 309.5 M1908 304.5 L1902 309.5" stroke="#000" stroke-width="1.8"/><line x1="1391" y1="348.5" x2="1919" y2="348.5" stroke="#e4e4e4" stroke-width="1"/><path d="M1393.5 347 V326.5 H1497.5 V347" fill="none" stroke="#9a9a9a" stroke-width="1"/><path d="M1401 356 L1408 362 L1401 368Z" fill="#111"/><defs><pattern id="dp360" x="1505" y="360" width="4" height="4" patternUnits="userSpaceOnUse"><rect width="1" height="1" fill="#000"/><rect x="2" y="2" width="1" height="1" fill="#000"/></pattern></defs><rect x="1505" y="360" width="385" height="5" fill="url(#dp360)"/><path d="M1902 359.5 L1908 364.5 M1908 359.5 L1902 364.5" stroke="#000" stroke-width="1.8"/><line x1="1391" y1="403.5" x2="1919" y2="403.5" stroke="#e4e4e4" stroke-width="1"/><path d="M1393.5 402 V381.5 H1464.5 V402" fill="none" stroke="#9a9a9a" stroke-width="1"/><path d="M1401 411 L1408 417 L1401 423Z" fill="#111"/><defs><pattern id="dp414" x="1505" y="414" width="4" height="4" patternUnits="userSpaceOnUse"><rect width="1" height="1" fill="#000"/><rect x="2" y="2" width="1" height="1" fill="#000"/></pattern></defs><rect x="1505" y="414" width="385" height="5" fill="url(#dp414)"/><path d="M1902 414.5 L1908 419.5 M1908 414.5 L1902 419.5" stroke="#000" stroke-width="1.8"/><line x1="1391" y1="458.5" x2="1919" y2="458.5" stroke="#e4e4e4" stroke-width="1"/><path d="M1393.5 457 V436.5 H1481.5 V457" fill="none" stroke="#9a9a9a" stroke-width="1"/></svg>
<div style="position:absolute;left:1425px;top:197.5px;transform:translate(0,-50%);white-space:nowrap;font-family:'Liberation Sans', sans-serif;font-size:14.8px;line-height:1;color:#111;">视图工具页</div>
<div style="position:absolute;left:1444.4px;top:226px;transform:translate(-50%,-50%);white-space:nowrap;font-family:'Liberation Sans', sans-serif;font-size:14.8px;line-height:1;color:#111;">视图</div>
<div style="position:absolute;left:1549px;top:226px;transform:translate(-50%,-50%);white-space:nowrap;font-family:'Liberation Sans', sans-serif;font-size:14.8px;line-height:1;color:#111;">多截面</div>
<div style="position:absolute;left:1654px;top:226px;transform:translate(-50%,-50%);white-space:nowrap;font-family:'Liberation Sans', sans-serif;font-size:14.8px;line-height:1;color:#111;">切片</div>
<div style="position:absolute;left:1760px;top:226px;transform:translate(-50%,-50%);white-space:nowrap;font-family:'Liberation Sans', sans-serif;font-size:14.8px;line-height:1;color:#111;">网格</div>
<div style="position:absolute;left:1425px;top:252px;transform:translate(0,-50%);white-space:nowrap;font-family:'Liberation Sans', sans-serif;font-size:14.8px;line-height:1;color:#111;">零件工具页</div>
<div style="position:absolute;left:1436px;top:281px;transform:translate(-50%,-50%);white-space:nowrap;font-family:'Liberation Sans', sans-serif;font-size:14.8px;line-height:1;color:#111;">零件列表</div>
<div style="position:absolute;left:1525.5px;top:281px;transform:translate(-50%,-50%);white-space:nowrap;font-family:'Liberation Sans', sans-serif;font-size:14.8px;line-height:1;color:#111;">零件信息</div>
<div style="position:absolute;left:1630.7px;top:281px;transform:translate(-50%,-50%);white-space:nowrap;font-family:'Liberation Sans', sans-serif;font-size:14.8px;line-height:1;color:#111;">零件修复信息</div>
<div style="position:absolute;left:1771.5px;top:281px;transform:translate(-50%,-50%);white-space:nowrap;font-family:'Liberation Sans', sans-serif;font-size:14.8px;line-height:1;color:#111;"><span style="font-family:Liberation Mono;font-size:12.6px">Streamics</span>零件标签</div>
<div style="position:absolute;left:1876px;top:281px;transform:translate(-50%,-50%);white-space:nowrap;font-family:'Liberation Sans', sans-serif;font-size:14.8px;line-height:1;color:#111;">视</div>
<div style="position:absolute;left:1425px;top:307px;transform:translate(0,-50%);white-space:nowrap;font-family:'Liberation Sans', sans-serif;font-size:14.8px;line-height:1;color:#111;">注释工具页</div>
<div style="position:absolute;left:1444.4px;top:336px;transform:translate(-50%,-50%);white-space:nowrap;font-family:'Liberation Sans', sans-serif;font-size:14.8px;line-height:1;color:#111;">文字</div>
<div style="position:absolute;left:1549px;top:336px;transform:translate(-50%,-50%);white-space:nowrap;font-family:'Liberation Sans', sans-serif;font-size:14.8px;line-height:1;color:#111;">绘画</div>
<div style="position:absolute;left:1654px;top:336px;transform:translate(-50%,-50%);white-space:nowrap;font-family:'Liberation Sans', sans-serif;font-size:14.8px;line-height:1;color:#111;">附件</div>
<div style="position:absolute;left:1760px;top:336px;transform:translate(-50%,-50%);white-space:nowrap;font-family:'Liberation Sans', sans-serif;font-size:14.8px;line-height:1;color:#111;">纹理</div>
<div style="position:absolute;left:1425px;top:362px;transform:translate(0,-50%);white-space:nowrap;font-family:'Liberation Sans', sans-serif;font-size:14.8px;line-height:1;color:#111;">测量工具页</div>
<div style="position:absolute;left:1426.6px;top:391px;transform:translate(-50%,-50%);white-space:nowrap;font-family:'Liberation Sans', sans-serif;font-size:14.8px;line-height:1;color:#111;">距离</div>
<div style="position:absolute;left:1500px;top:391px;transform:translate(-50%,-50%);white-space:nowrap;font-family:'Liberation Sans', sans-serif;font-size:14.8px;line-height:1;color:#111;">圆形</div>
<div style="position:absolute;left:1573px;top:391px;transform:translate(-50%,-50%);white-space:nowrap;font-family:'Liberation Sans', sans-serif;font-size:14.8px;line-height:1;color:#111;">角度</div>
<div style="position:absolute;left:1645.7px;top:391px;transform:translate(-50%,-50%);white-space:nowrap;font-family:'Liberation Sans', sans-serif;font-size:14.8px;line-height:1;color:#111;">信息</div>
<div style="position:absolute;left:1727.6px;top:391px;transform:translate(-50%,-50%);white-space:nowrap;font-family:'Liberation Sans', sans-serif;font-size:14.8px;line-height:1;color:#111;">最终零件</div>
<div style="position:absolute;left:1808px;top:391px;transform:translate(-50%,-50%);white-space:nowrap;font-family:'Liberation Sans', sans-serif;font-size:14.8px;line-height:1;color:#111;">报告</div>
<div style="position:absolute;left:1425px;top:417px;transform:translate(0,-50%);white-space:nowrap;font-family:'Liberation Sans', sans-serif;font-size:14.8px;line-height:1;color:#111;">修复工具页</div>
<div style="position:absolute;left:1436px;top:446px;transform:translate(-50%,-50%);white-space:nowrap;font-family:'Liberation Sans', sans-serif;font-size:14.8px;line-height:1;color:#111;">自动修复</div>
<div style="position:absolute;left:1510.6px;top:446px;transform:translate(-50%,-50%);white-space:nowrap;font-family:'Liberation Sans', sans-serif;font-size:14.8px;line-height:1;color:#111;">基本</div>
<div style="position:absolute;left:1568px;top:446px;transform:translate(-50%,-50%);white-space:nowrap;font-family:'Liberation Sans', sans-serif;font-size:14.8px;line-height:1;color:#111;">孔</div>
<div style="position:absolute;left:1641.4px;top:446px;transform:translate(-50%,-50%);white-space:nowrap;font-family:'Liberation Sans', sans-serif;font-size:14.8px;line-height:1;color:#111;">三角面片</div>
<div style="position:absolute;left:1717px;top:446px;transform:translate(-50%,-50%);white-space:nowrap;font-family:'Liberation Sans', sans-serif;font-size:14.8px;line-height:1;color:#111;">壳体</div>
<div style="position:absolute;left:1776.5px;top:446px;transform:translate(-50%,-50%);white-space:nowrap;font-family:'Liberation Sans', sans-serif;font-size:14.8px;line-height:1;color:#111;">重叠</div>
<div style="position:absolute;left:1834px;top:446px;transform:translate(-50%,-50%);white-space:nowrap;font-family:'Liberation Sans', sans-serif;font-size:14.8px;line-height:1;color:#111;">点</div>
<div style="position:absolute;left:1866px;top:270px;width:53px;height:22px;background:#fff"></div>
<div style="position:absolute;left:1869px;top:281px;transform:translate(0,-50%);white-space:nowrap;font-family:'Liberation Sans', sans-serif;font-size:14.8px;line-height:1;color:#111;width:12px;overflow:hidden">视</div>
<svg style="position:absolute;left:1879px;top:269px;" width="40" height="23" viewBox="0 0 40 23"><rect x="0.5" y="0.5" width="20" height="22" fill="#fcfcfc" stroke="#f0f0f0"/><path d="M13 4 L6 10 L13 16Z" fill="#b0b0b0"/><rect x="20.5" y="0.5" width="19" height="22" fill="#fff" stroke="#c8c8c8"/><path d="M26 4 L33.5 10.2 L26 16.5Z" fill="#000"/></svg>
<div style="position:absolute;left:0px;top:1005px;width:1919px;height:21px;background:#2a98fd;border-top:1px solid #3a86d0;box-sizing:border-box"></div>
<div style="position:absolute;left:6px;top:1018px;transform:translate(0,-50%);white-space:nowrap;font-family:'Liberation Sans', sans-serif;font-size:15px;line-height:1;color:#fff;">准备完毕</div>
</div></body></html>
